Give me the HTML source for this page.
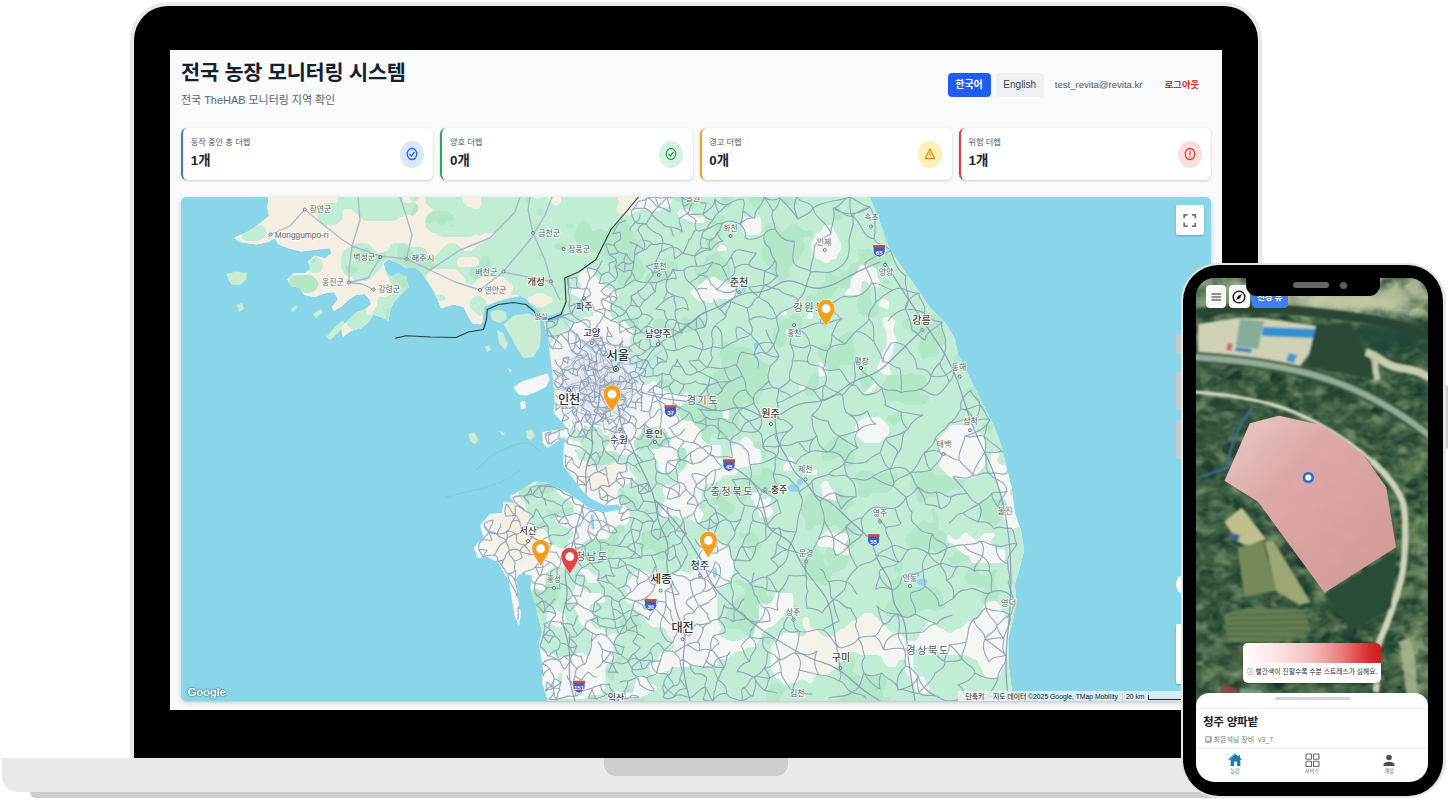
<!DOCTYPE html>
<html lang="ko">
<head>
<meta charset="utf-8">
<title>전국 농장 모니터링 시스템</title>
<style>
*{box-sizing:border-box;margin:0;padding:0}
html,body{width:1450px;height:800px;background:#fff;overflow:hidden}
body{position:relative;font-family:"Liberation Sans","Noto Sans CJK KR",sans-serif;color:#111827}
.abs{position:absolute}
/* laptop */
.lid{position:absolute;left:130px;top:2px;width:1132px;height:760px;background:#000;border:4px solid #e7e9e9;border-bottom:none;border-radius:38px 38px 0 0}
.screen{position:absolute;left:170px;top:50px;width:1052px;height:660px;background:#f8fafb;overflow:hidden}
.base{position:absolute;left:2px;top:758px;width:1388px;height:34px;background:#e9e9e9;border-radius:0 0 16px 16px}
.base .notch{position:absolute;left:602px;top:0;width:184px;height:17.5px;background:#cdcfcf;border-radius:0 0 12px 12px}
.foot{position:absolute;left:30px;top:792px;width:1332px;height:6px;background:#cdcfcf;border-radius:0 0 6px 6px}
/* dashboard */
.title{position:absolute;left:11px;top:8.8px;font-size:20.8px;font-weight:700;color:#15202f;letter-spacing:-.22px;line-height:28px;white-space:nowrap}
.sub{position:absolute;left:11px;top:42px;font-size:10.95px;color:#5b6470;line-height:16px;white-space:nowrap}
.btn{position:absolute;top:22.5px;height:24px;line-height:24px;text-align:center;font-size:10px;border-radius:4px;white-space:nowrap}
.card{position:absolute;top:78px;width:252.25px;height:52px;background:#fff;border-radius:6px;border-left:2.6px solid #3b82f6;box-shadow:0 1px 3px rgba(15,23,42,.13),0 1px 2px rgba(15,23,42,.07)}
.card .lb{position:absolute;left:7.7px;top:9.5px;font-size:8.2px;line-height:10px;color:#4b5563;white-space:nowrap}
.card .val{position:absolute;left:7.7px;top:22.5px;font-size:13.4px;line-height:20px;font-weight:700;color:#1a2433;white-space:nowrap}
.card .ic{position:absolute;right:9.5px;top:12.5px;width:24px;height:27px;border-radius:50%}
.card .ic svg{position:absolute;left:6px;top:6.2px;width:12px;height:14px}
.map{position:absolute;left:11px;top:147px;width:1030px;height:504px;border-radius:6px;overflow:hidden;background:#89d5ea;box-shadow:0 2px 6px rgba(15,23,42,.17),0 1px 2px rgba(15,23,42,.1)}
</style>
</head>
<body>
<!-- laptop -->
<div class="lid"></div>
<div class="screen">
  <div class="title">전국 농장 모니터링 시스템</div>
  <div class="sub">전국 TheHAB 모니터링 지역 확인</div>
  <div class="btn" style="left:777.5px;width:43px;background:#1f5cf0;color:#fff;font-weight:700">한국어</div>
  <div class="btn" style="left:826px;width:47.5px;background:#eef1f4;color:#374151">English</div>
  <div class="btn" style="left:884.8px;color:#4b5563;font-size:9.55px">test_revita@revita.kr</div>
  <div class="btn" style="left:994.8px;color:#dc2626;font-weight:700;font-size:9.3px">로그아웃</div>

  <div class="card" style="left:11px;border-left-color:#3b7bea">
    <div class="lb">동작 중인 총 더헵</div><div class="val">1개</div>
    <div class="ic" style="background:#dbe7f8"><svg viewBox="0 0 24 24" preserveAspectRatio="none" fill="none" stroke="#2b63e3" stroke-width="2.6" stroke-linecap="round" stroke-linejoin="round"><circle cx="12" cy="12" r="9.5"/><path d="M7.8 12.4l3 3 5.4-6"/></svg></div>
  </div>
  <div class="card" style="left:270.25px;border-left-color:#2fa456">
    <div class="lb">양호 더헵</div><div class="val">0개</div>
    <div class="ic" style="background:#d5f3df"><svg viewBox="0 0 24 24" preserveAspectRatio="none" fill="none" stroke="#23964a" stroke-width="2.2" stroke-linecap="round" stroke-linejoin="round"><circle cx="12" cy="12" r="9.5"/><path d="M7.8 12.4l3 3 5.4-6"/></svg></div>
  </div>
  <div class="card" style="left:529.5px;border-left-color:#f0a11f">
    <div class="lb">경고 더헵</div><div class="val">0개</div>
    <div class="ic" style="background:#fdefb5"><svg viewBox="0 0 24 24" preserveAspectRatio="none" fill="none" stroke="#d58a0c" stroke-width="2.2" stroke-linecap="round" stroke-linejoin="round"><path d="M12 3.5L2.5 20h19z"/><path d="M12 10v4.5M12 17.2v.2"/></svg></div>
  </div>
  <div class="card" style="left:788.75px;border-left-color:#d94040">
    <div class="lb">위험 더헵</div><div class="val">1개</div>
    <div class="ic" style="background:#fddcdc"><svg viewBox="0 0 24 24" preserveAspectRatio="none" fill="none" stroke="#d43b3b" stroke-width="2.4" stroke-linecap="round" stroke-linejoin="round"><circle cx="12" cy="12" r="9.5"/><path d="M12 7v6M12 16.6v.2"/></svg></div>
  </div>

  <div class="map">
<svg viewBox="181 197 1030 504" width="1030" height="504" style="position:absolute;left:0;top:0;display:block">
<defs><clipPath id="landclip"><polygon points="268.5,197.0 267.3,208.3 269.0,215.8 258.5,224.5 247.3,232.0 234.0,237.8 239.8,242.0 256.0,244.5 268.5,242.0 274.8,238.3 278.5,244.5 288.5,248.3 301.0,251.5 317.3,249.5 329.8,248.3 331.8,253.3 324.8,258.3 314.8,255.8 308.0,261.5 310.5,269.0 304.8,273.3 294.0,273.3 287.3,279.5 291.0,285.8 300.5,288.3 304.0,295.0 314.8,297.0 324.8,293.3 334.0,292.0 338.0,299.5 331.8,307.0 334.0,310.8 341.0,307.0 348.0,300.0 356.0,295.0 364.8,294.0 369.8,299.5 371.0,304.5 364.8,309.5 356.0,312.5 348.5,320.0 341.0,327.5 343.0,337.0 351.0,330.8 361.0,328.3 368.5,322.0 373.5,314.5 381.0,317.0 388.5,320.8 389.8,312.0 393.5,302.0 401.0,294.5 408.5,287.0 406.0,277.0 398.5,273.3 391.0,277.0 386.0,272.0 383.5,263.3 388.5,259.5 398.5,263.3 406.0,268.3 414.8,267.0 421.0,272.0 427.3,280.8 433.5,290.8 438.5,302.0 441.0,308.3 453.5,304.5 463.5,307.0 468.5,317.0 472.3,323.3 481.0,324.5 484.8,317.0 487.3,307.0 496.0,302.0 508.5,298.3 521.0,295.8 527.3,299.5 532.3,307.0 543.5,320.8 548.0,337.0 549.8,354.5 552.3,372.0 553.5,384.5 554.8,402.0 553.5,413.3 559.8,419.5 566.0,427.0 558.5,429.5 546.0,432.0 542.3,442.0 547.3,448.3 558.5,440.8 564.8,437.0 563.5,449.5 563.4,465.7 572.8,478.2 582.2,490.8 590.0,498.0 604.2,505.5 618.3,504.5 621.4,509.6 605.7,512.3 592.0,509.0 588.5,508.0 579.0,500.2 566.5,492.4 547.7,483.0 535.1,481.4 522.6,489.2 510.0,496.4 514.7,503.3 503.8,501.8 502.2,512.8 489.6,514.3 480.2,525.3 483.4,537.9 474.0,547.3 477.1,558.3 488.1,556.7 499.0,563.6 505.3,575.5 508.5,578.6 511.6,597.5 514.7,616.3 518.8,625.7 521.0,613.2 517.9,594.3 516.3,578.6 519.4,574.0 532.0,575.5 530.4,588.1 535.1,603.7 538.9,619.4 542.0,632.0 538.9,644.5 542.0,663.4 542.0,682.2 547.7,701.0 1013.2,701.0 1011.6,688.5 1008.5,663.3 1008.5,638.1 1013.2,619.2 1016.3,600.3 1014.8,584.5 1019.5,568.8 1024.2,549.9 1021.1,530.9 1014.8,512.0 1011.6,486.8 1006.9,467.9 1002.2,449.1 995.9,430.2 986.4,411.3 977.0,392.4 967.5,373.5 958.0,354.6 954.9,338.8 945.4,323.0 929.7,307.3 917.0,288.4 901.3,266.3 888.7,247.4 882.4,228.5 876.0,212.8 869.8,197.0"/></clipPath>
<filter id="soft" x="-5%" y="-5%" width="110%" height="110%"><feGaussianBlur stdDeviation="0.6"/></filter>
<filter id="blur8" x="-30%" y="-30%" width="160%" height="160%"><feGaussianBlur stdDeviation="9"/></filter>
<filter id="goo" x="181" y="197" width="1030" height="504" filterUnits="userSpaceOnUse" color-interpolation-filters="sRGB"><feGaussianBlur stdDeviation="2.2" result="b"/><feComponentTransfer><feFuncA type="linear" slope="14" intercept="-6"/></feComponentTransfer></filter>
</defs>
<rect x="181" y="197" width="1030" height="504" fill="#89d5ea"/>
<g filter="url(#soft)">
<polygon points="268.5,197.0 267.3,208.3 269.0,215.8 258.5,224.5 247.3,232.0 234.0,237.8 239.8,242.0 256.0,244.5 268.5,242.0 274.8,238.3 278.5,244.5 288.5,248.3 301.0,251.5 317.3,249.5 329.8,248.3 331.8,253.3 324.8,258.3 314.8,255.8 308.0,261.5 310.5,269.0 304.8,273.3 294.0,273.3 287.3,279.5 291.0,285.8 300.5,288.3 304.0,295.0 314.8,297.0 324.8,293.3 334.0,292.0 338.0,299.5 331.8,307.0 334.0,310.8 341.0,307.0 348.0,300.0 356.0,295.0 364.8,294.0 369.8,299.5 371.0,304.5 364.8,309.5 356.0,312.5 348.5,320.0 341.0,327.5 343.0,337.0 351.0,330.8 361.0,328.3 368.5,322.0 373.5,314.5 381.0,317.0 388.5,320.8 389.8,312.0 393.5,302.0 401.0,294.5 408.5,287.0 406.0,277.0 398.5,273.3 391.0,277.0 386.0,272.0 383.5,263.3 388.5,259.5 398.5,263.3 406.0,268.3 414.8,267.0 421.0,272.0 427.3,280.8 433.5,290.8 438.5,302.0 441.0,308.3 453.5,304.5 463.5,307.0 468.5,317.0 472.3,323.3 481.0,324.5 484.8,317.0 487.3,307.0 496.0,302.0 508.5,298.3 521.0,295.8 527.3,299.5 532.3,307.0 543.5,320.8 548.0,337.0 549.8,354.5 552.3,372.0 553.5,384.5 554.8,402.0 553.5,413.3 559.8,419.5 566.0,427.0 558.5,429.5 546.0,432.0 542.3,442.0 547.3,448.3 558.5,440.8 564.8,437.0 563.5,449.5 563.4,465.7 572.8,478.2 582.2,490.8 590.0,498.0 604.2,505.5 618.3,504.5 621.4,509.6 605.7,512.3 592.0,509.0 588.5,508.0 579.0,500.2 566.5,492.4 547.7,483.0 535.1,481.4 522.6,489.2 510.0,496.4 514.7,503.3 503.8,501.8 502.2,512.8 489.6,514.3 480.2,525.3 483.4,537.9 474.0,547.3 477.1,558.3 488.1,556.7 499.0,563.6 505.3,575.5 508.5,578.6 511.6,597.5 514.7,616.3 518.8,625.7 521.0,613.2 517.9,594.3 516.3,578.6 519.4,574.0 532.0,575.5 530.4,588.1 535.1,603.7 538.9,619.4 542.0,632.0 538.9,644.5 542.0,663.4 542.0,682.2 547.7,701.0 1013.2,701.0 1011.6,688.5 1008.5,663.3 1008.5,638.1 1013.2,619.2 1016.3,600.3 1014.8,584.5 1019.5,568.8 1024.2,549.9 1021.1,530.9 1014.8,512.0 1011.6,486.8 1006.9,467.9 1002.2,449.1 995.9,430.2 986.4,411.3 977.0,392.4 967.5,373.5 958.0,354.6 954.9,338.8 945.4,323.0 929.7,307.3 917.0,288.4 901.3,266.3 888.7,247.4 882.4,228.5 876.0,212.8 869.8,197.0" fill="#f4f6f3"/>
<polygon points="226.0,274.0 236.0,271.5 247.0,273.0 246.0,280.0 240.0,285.0 231.0,284.5" fill="#c9ecd3"/>
<polygon points="237.0,305.0 242.0,303.0 244.0,309.0 239.0,312.0" fill="#c9ecd3"/>
<polygon points="291.0,309.0 296.0,305.0 297.0,308.0 293.0,312.0" fill="#c9ecd3"/>
<polygon points="313.0,314.0 321.0,309.0 323.0,312.0 316.0,318.0" fill="#c9ecd3"/>
<polygon points="326.0,337.0 336.0,326.0 343.0,320.0 345.0,324.0 338.0,333.0 330.0,340.0" fill="#c9ecd3"/>
<polygon points="490.0,312.0 498.0,309.5 506.0,312.0 507.0,319.0 500.0,323.0 492.0,320.0" fill="#c9ecd3"/>
<polygon points="503.5,324.5 513.5,315.8 528.5,313.3 539.8,319.5 541.0,332.0 539.8,347.0 533.5,357.0 523.5,358.3 516.0,347.0 511.0,337.0" fill="#c9ecd3"/>
<polygon points="497.0,330.0 503.0,333.0 508.0,344.0 505.0,350.0 499.0,343.0" fill="#c9ecd3"/>
<polygon points="468.5,434.0 474.0,432.0 478.5,440.0 475.0,444.5 470.0,441.0" fill="#c9ecd3"/>
<polygon points="526.0,431.0 532.0,429.5 534.8,436.0 531.0,440.8 527.0,438.0" fill="#c9ecd3"/>
<polygon points="499.0,431.0 505.0,433.0 503.0,436.0" fill="#c9ecd3"/>
<polygon points="485.0,347.0 489.0,345.0 491.0,350.0 487.0,352.0" fill="#c9ecd3"/>
<polygon points="508.0,368.0 512.0,370.0 510.0,373.0" fill="#c9ecd3"/>
<polygon points="513.5,387.0 523.5,380.8 536.0,377.0 547.3,373.3 549.8,379.5 546.0,387.0 536.0,392.0 526.0,395.8 518.5,394.5" fill="#f4f5f5"/>
<polygon points="520.0,402.0 525.0,401.0 526.0,408.0 521.0,409.5" fill="#f4f5f5"/>
<polygon points="542.0,432.0 556.0,430.0 560.0,437.0 550.0,446.0 543.0,442.0" fill="#f4f5f5"/>
</g>
<g clip-path="url(#landclip)">
<polygon points="181,197 640,197 600,250 566,280 566,330 181,345" fill="#f4efe2"/>
<ellipse cx="516" cy="528" rx="22" ry="40" fill="#f4eedd" filter="url(#blur8)"/>
<ellipse cx="600" cy="470" rx="22" ry="30" fill="#f4f0e2" filter="url(#blur8)" opacity=".8"/>
<ellipse cx="840" cy="640" rx="40" ry="40" fill="#f5f1e4" filter="url(#blur8)" opacity=".7"/>
<g filter="url(#goo)" fill="none" stroke="#c0edd4" stroke-linecap="round" stroke-width="5.2">
<path d="M344,190h56M448,190h8M480,190h36M560,190h64M656,190h192M884,190h60M988,190h52M344,194h56M412,194h8M432,194h24M480,194h48M544,194h.01M560,194h52M656,194h196M864,194h.01M876,194h76M988,194h52M340,198h60M412,198h4M428,198h32M484,198h48M544,198h.01M564,198h52M672,198h288M984,198h56M340,202h60M428,202h32M484,202h64M564,202h12M584,202h32M676,202h288M980,202h60M324,206h12M344,206h72M432,206h32M484,206h68M560,206h56M672,206h296M980,206h60M320,210h20M356,210h60M440,210h32M480,210h132M644,210h.01M664,210h12M692,210h348M320,214h20M360,214h44M412,214h.01M432,214h184M636,214h36M696,214h344M320,218h20M364,218h32M428,218h252M708,218h32M764,218h276M200,222h.01M324,222h12M428,222h260M708,222h32M764,222h276M200,226h12M260,226h.01M428,226h312M764,226h56M836,226h204M200,230h12M252,230h12M432,230h308M764,230h56M836,230h204M200,234h12M244,234h20M440,234h32M480,234h.01M500,234h240M764,234h48M840,234h200M200,238h8M244,238h16M496,238h316M840,238h200M200,242h8M488,242h320M844,242h196M200,246h8M356,246h12M392,246h16M448,246h8M480,246h236M728,246h80M844,246h196M200,250h12M348,250h24M392,250h32M444,250h16M476,250h236M732,250h76M844,250h196M200,254h16M344,254h32M384,254h40M440,254h372M840,254h200M200,258h16M316,258h.01M344,258h84M436,258h20M480,258h332M840,258h200M200,262h36M312,262h8M344,262h36M396,262h56M484,262h336M832,262h208M200,266h36M312,266h8M344,266h36M392,266h64M480,266h364M852,266h4M876,266h92M980,266h60M200,270h40M312,270h8M344,270h32M392,270h36M460,270h120M596,270h112M716,270h140M880,270h84M980,270h60M204,274h36M348,274h24M388,274h8M408,274h16M464,274h112M596,274h256M880,274h84M980,274h60M204,278h36M292,278h20M356,278h12M392,278h12M412,278h8M468,278h8M508,278h68M600,278h104M720,278h128M880,278h84M980,278h60M208,282h16M292,282h24M392,282h12M412,282h8M468,282h4M512,282h64M604,282h96M728,282h120M864,282h.01M884,282h80M980,282h60M208,286h12M292,286h24M396,286h24M516,286h64M608,286h88M736,286h112M864,286h4M884,286h80M980,286h60M208,290h8M304,290h8M396,290h28M516,290h52M616,290h72M740,290h104M864,290h100M980,290h60M208,294h4M248,294h.01M396,294h4M408,294h24M512,294h.01M520,294h12M548,294h20M624,294h64M740,294h100M864,294h100M980,294h60M380,298h.01M388,298h56M476,298h4M524,298h.01M556,298h20M620,298h8M636,298h56M736,298h144M888,298h152M380,302h48M472,302h12M520,302h4M556,302h28M616,302h80M704,302h.01M716,302h160M892,302h148M380,306h44M472,306h12M524,306h8M548,306h36M612,306h264M892,306h148M364,310h.01M376,310h48M476,310h8M524,310h64M612,310h168M788,310h96M892,310h148M356,314h8M376,314h48M480,314h.01M524,314h68M612,314h164M792,314h12M816,314h224M352,318h68M532,318h48M616,318h188M816,318h64M896,318h144M348,322h24M380,322h40M540,322h32M628,322h116M756,322h124M900,322h140M352,326h72M544,326h20M632,326h248M896,326h144M356,330h16M380,330h44M544,330h16M568,330h.01M636,330h144M792,330h92M896,330h144M360,334h8M384,334h40M544,334h12M636,334h148M796,334h88M896,334h144M200,338h4M384,338h8M400,338h24M544,338h8M632,338h252M900,338h140M200,342h12M252,342h20M404,342h16M544,342h4M632,342h252M900,342h140M200,346h12M248,346h40M432,346h.01M544,346h4M636,346h248M896,346h128M200,350h16M244,350h44M428,350h4M544,350h4M632,350h248M896,350h124M200,354h92M432,354h.01M548,354h.01M632,354h248M896,354h124M200,358h96M544,358h4M628,358h140M776,358h40M824,358h56M892,358h128M200,362h100M548,362h.01M632,362h184M824,362h52M892,362h112M200,366h104M516,366h.01M636,366h180M828,366h48M892,366h104M200,370h108M516,370h.01M636,370h180M828,370h44M892,370h100M200,374h108M516,374h.01M636,374h180M832,374h48M896,374h100M200,378h108M408,378h.01M432,378h.01M552,378h.01M636,378h180M824,378h4M840,378h152M200,382h96M408,382h.01M544,382h8M640,382h8M660,382h212M880,382h108M200,386h96M404,386h4M420,386h.01M544,386h8M660,386h136M808,386h60M880,386h108M200,390h96M408,390h12M544,390h8M668,390h128M808,390h56M876,390h112M200,394h96M408,394h12M544,394h8M680,394h.01M692,394h168M872,394h120M200,398h100M408,398h8M452,398h.01M544,398h8M692,398h304M1012,398h12M200,402h100M332,402h.01M412,402h4M448,402h12M544,402h8M688,402h344M200,406h104M328,406h8M448,406h16M544,406h8M684,406h348M200,410h104M324,410h24M444,410h20M544,410h8M680,410h40M732,410h300M200,414h104M320,414h28M444,414h20M544,414h8M680,414h40M732,414h300M204,418h104M320,418h28M444,418h24M544,418h12M684,418h36M732,418h128M884,418h152M208,422h124M440,422h32M544,422h16M696,422h128M836,422h20M888,422h152M212,426h104M416,426h56M544,426h20M700,426h152M892,426h56M976,426h64M212,430h32M252,430h60M420,430h44M544,430h8M572,430h.01M584,430h16M644,430h20M704,430h148M892,430h52M980,430h60M216,434h24M260,434h52M420,434h44M544,434h.01M572,434h28M644,434h20M704,434h148M892,434h48M984,434h32M1024,434h16M220,438h20M256,438h40M304,438h4M424,438h44M564,438h.01M572,438h36M640,438h28M704,438h36M752,438h104M888,438h48M988,438h52M224,442h16M252,442h40M428,442h44M560,442h4M584,442h24M636,442h32M708,442h28M756,442h104M884,442h52M988,442h52M224,446h.01M236,446h60M368,446h8M436,446h36M544,446h.01M552,446h8M584,446h20M636,446h24M724,446h4M756,446h180M988,446h52M224,450h.01M244,450h52M364,450h20M440,450h36M548,450h12M576,450h.01M588,450h12M640,450h8M680,450h4M724,450h4M764,450h172M988,450h4M1000,450h40M224,454h.01M240,454h56M364,454h28M440,454h32M552,454h8M580,454h36M640,454h8M680,454h4M724,454h4M764,454h172M988,454h.01M1004,454h36M224,458h72M364,458h32M440,458h32M552,458h8M580,458h72M680,458h4M724,458h4M764,458h20M796,458h140M988,458h.01M1000,458h40M228,462h68M364,462h20M392,462h4M440,462h32M548,462h8M592,462h20M624,462h32M680,462h4M764,462h20M796,462h140M988,462h.01M1000,462h8M1016,462h24M244,466h56M376,466h16M432,466h36M544,466h12M596,466h4M632,466h24M680,466h4M752,466h4M764,466h16M796,466h140M988,466h.01M1024,466h16M256,470h44M384,470h8M432,470h36M544,470h20M632,470h24M680,470h.01M740,470h40M796,470h8M820,470h120M984,470h4M1032,470h8M260,474h40M384,474h8M428,474h36M544,474h24M636,474h24M668,474h8M740,474h60M820,474h124M980,474h8M1028,474h12M260,478h40M384,478h12M424,478h40M492,478h.01M544,478h28M640,478h36M724,478h72M804,478h144M976,478h16M1028,478h12M264,482h32M360,482h.01M384,482h12M428,482h36M540,482h32M636,482h36M720,482h100M832,482h164M1032,482h8M200,486h.01M360,486h12M384,486h16M428,486h36M536,486h12M556,486h20M628,486h32M708,486h108M832,486h164M1032,486h8M200,490h4M356,490h60M428,490h8M524,490h28M564,490h16M620,490h40M704,490h52M764,490h56M836,490h160M1012,490h.01M1032,490h8M200,494h12M352,494h64M428,494h4M520,494h36M572,494h4M620,494h40M704,494h44M764,494h56M840,494h160M1012,494h.01M1028,494h12M200,498h12M348,498h68M428,498h4M472,498h.01M524,498h36M576,498h.01M620,498h44M704,498h44M764,498h.01M776,498h44M840,498h160M1028,498h12M200,502h12M348,502h84M528,502h40M624,502h36M704,502h48M772,502h60M840,502h164M1028,502h12M200,506h12M348,506h92M528,506h44M616,506h.01M628,506h32M700,506h52M772,506h232M1028,506h12M200,510h8M348,510h96M528,510h44M632,510h28M704,510h52M776,510h228M1032,510h.01M200,514h8M264,514h8M340,514h24M384,514h68M532,514h28M568,514h.01M632,514h24M708,514h48M776,514h224M1032,514h.01M200,518h8M264,518h32M340,518h20M384,518h72M532,518h20M632,518h28M672,518h4M704,518h52M764,518h.01M772,518h228M1032,518h.01M200,522h12M264,522h8M280,522h16M336,522h20M388,522h68M532,522h20M632,522h60M704,522h300M1028,522h12M200,526h8M264,526h4M280,526h16M336,526h16M388,526h72M536,526h24M620,526h.01M628,526h376M1024,526h16M280,530h16M324,530h28M388,530h72M548,530h20M616,530h208M832,530h176M1016,530h24M280,534h16M320,534h32M388,534h76M552,534h20M612,534h48M680,534h.01M704,534h116M852,534h92M952,534h8M972,534h8M1000,534h40M276,538h20M320,538h32M388,538h76M552,538h16M612,538h204M852,538h92M956,538h.01M976,538h.01M996,538h44M276,542h20M320,542h32M388,542h76M552,542h12M588,542h120M720,542h92M848,542h96M992,542h48M236,546h8M252,546h8M272,546h24M320,546h28M388,546h76M560,546h4M584,546h116M728,546h88M848,546h104M996,546h44M228,550h52M288,550h16M316,550h24M388,550h60M456,550h12M568,550h128M732,550h100M852,550h104M1008,550h32M212,554h68M292,554h48M388,554h56M460,554h16M568,554h128M732,554h100M852,554h108M1008,554h32M212,558h68M304,558h36M392,558h16M420,558h24M464,558h12M568,558h124M736,558h232M1008,558h32M216,562h64M316,562h28M392,562h16M420,562h24M464,562h12M568,562h124M736,562h232M1008,562h32M216,566h64M312,566h32M392,566h16M420,566h24M464,566h8M568,566h124M736,566h304M216,570h68M296,570h.01M312,570h32M396,570h4M408,570h36M464,570h8M552,570h12M592,570h40M640,570h.01M648,570h28M684,570h8M736,570h304M212,574h68M316,574h28M408,574h64M548,574h32M596,574h36M652,574h20M736,574h304M212,578h28M264,578h8M320,578h12M348,578h.01M408,578h64M548,578h36M604,578h24M660,578h4M732,578h308M216,582h24M268,582h.01M320,582h12M408,582h64M548,582h36M604,582h20M732,582h308M224,586h12M316,586h16M400,586h80M548,586h24M584,586h40M728,586h312M312,590h20M396,590h88M536,590h.01M548,590h24M588,590h36M720,590h320M308,594h24M392,594h12M420,594h64M528,594h40M604,594h20M720,594h52M796,594h244M308,598h20M392,598h8M416,598h68M528,598h36M608,598h12M720,598h52M796,598h244M308,602h16M392,602h8M416,602h68M528,602h40M608,602h16M720,602h36M764,602h4M796,602h188M1000,602h40M308,606h12M412,606h76M532,606h40M592,606h40M720,606h36M796,606h184M1004,606h36M408,610h80M532,610h16M560,610h12M592,610h40M720,610h36M796,610h184M1004,610h36M404,614h88M532,614h12M568,614h8M596,614h44M720,614h36M788,614h72M876,614h100M1008,614h32M404,618h88M532,618h12M568,618h8M596,618h44M720,618h36M784,618h16M812,618h44M880,618h96M1008,618h32M212,622h.01M404,622h88M532,622h12M568,622h8M592,622h52M720,622h36M780,622h20M812,622h36M884,622h40M936,622h28M1012,622h28M208,626h4M352,626h.01M376,626h4M404,626h88M528,626h24M568,626h12M596,626h52M724,626h28M776,626h24M812,626h32M888,626h36M940,626h20M1012,626h28M200,630h16M352,630h.01M364,630h12M404,630h100M524,630h60M608,630h56M724,630h28M768,630h36M820,630h16M892,630h28M948,630h4M1012,630h28M200,634h16M364,634h8M404,634h104M520,634h68M608,634h.01M620,634h44M720,634h32M764,634h16M800,634h4M824,634h8M904,634h12M1012,634h28M200,638h16M360,638h12M420,638h168M620,638h48M728,638h12M764,638h8M908,638h8M1012,638h28M200,642h20M248,642h.01M360,642h16M428,642h160M616,642h56M760,642h12M1012,642h28M200,646h20M248,646h.01M360,646h16M396,646h.01M428,646h160M616,646h56M760,646h8M1012,646h28M200,650h16M364,650h24M428,650h104M544,650h44M616,650h52M748,650h20M920,650h.01M1012,650h28M200,654h8M380,654h12M412,654h8M428,654h96M556,654h16M588,654h.01M616,654h40M736,654h32M852,654h4M916,654h4M936,654h4M1012,654h28M200,658h8M384,658h16M444,658h76M616,658h40M732,658h36M848,658h32M916,658h52M1012,658h28M200,662h4M248,662h.01M392,662h12M444,662h24M488,662h8M512,662h8M612,662h40M720,662h48M844,662h36M900,662h4M916,662h60M1008,662h32M200,666h4M308,666h4M396,666h8M448,666h16M516,666h.01M608,666h36M720,666h48M840,666h44M900,666h4M916,666h60M1008,666h32M200,670h4M304,670h20M396,670h12M448,670h16M516,670h.01M608,670h40M672,670h96M836,670h64M916,670h64M1004,670h36M200,674h8M256,674h20M296,674h28M456,674h8M516,674h.01M560,674h.01M608,674h28M644,674h4M664,674h108M808,674h.01M832,674h72M920,674h60M1004,674h36M200,678h8M248,678h4M260,678h60M460,678h.01M560,678h.01M608,678h28M648,678h124M816,678h92M928,678h56M1000,678h40M200,682h8M248,682h4M260,682h60M476,682h.01M560,682h.01M608,682h24M652,682h128M800,682h4M816,682h92M928,682h108M200,686h8M248,686h76M476,686h.01M608,686h24M660,686h120M788,686h8M804,686h108M932,686h108M200,690h8M248,690h4M260,690h64M348,690h.01M476,690h4M544,690h.01M608,690h4M620,690h12M660,690h136M804,690h108M932,690h108M200,694h8M264,694h60M348,694h.01M476,694h.01M544,694h.01M604,694h4M652,694h264M928,694h108M200,698h4M264,698h16M292,698h4M320,698h8M348,698h.01M476,698h.01M544,698h.01M588,698h16M644,698h388M200,702h4M276,702h.01M292,702h4M320,702h4M348,702h.01M464,702h16M544,702h72M624,702h292M924,702h108M200,706h8M256,706h.01M320,706h4M340,706h8M464,706h20M544,706h72M624,706h292M924,706h108"/>
</g>
<g filter="url(#goo)" fill="none" stroke="#aee5c5" stroke-linecap="round" stroke-width="5.2" opacity=".8">
<path d="M344,190h.01M560,190h4M616,190h8M656,190h44M712,190h8M740,190h16M780,190h8M804,190h24M940,190h4M544,194h.01M660,194h32M716,194h8M744,194h12M780,194h8M816,194h12M948,194h4M1036,194h4M528,198h.01M676,198h16M724,198h8M752,198h8M768,198h.01M784,198h4M1000,198h.01M1036,198h4M528,202h.01M608,202h.01M684,202h12M724,202h4M752,202h12M776,202h.01M784,202h12M1000,202h4M1036,202h4M416,206h.01M684,206h8M724,206h4M756,206h4M892,206h.01M1000,206h4M1036,206h4M416,210h.01M540,210h.01M892,210h8M956,210h8M1012,210h4M1024,210h16M412,214h.01M432,214h16M540,214h.01M836,214h4M892,214h16M952,214h4M996,214h32M428,218h24M716,218h8M836,218h4M900,218h8M996,218h8M1012,218h12M428,222h.01M440,222h4M584,222h.01M712,222h8M888,222h.01M1020,222h.01M1028,222h.01M452,226h.01M536,226h4M568,226h4M580,226h8M616,226h12M716,226h4M768,226h8M792,226h4M888,226h.01M900,226h.01M984,226h.01M1000,226h.01M536,230h.01M580,230h8M600,230h.01M612,230h16M716,230h4M768,230h8M788,230h12M888,230h12M912,230h4M980,230h8M1000,230h.01M576,234h56M720,234h.01M768,234h44M884,234h12M912,234h4M988,234h4M1000,234h.01M1028,234h.01M576,238h56M708,238h.01M768,238h32M888,238h24M992,238h8M580,242h60M708,242h8M768,242h32M888,242h24M996,242h4M400,246h4M556,246h8M584,246h56M708,246h8M764,246h40M888,246h20M932,246h.01M364,250h4M400,250h8M588,250h.01M596,250h44M764,250h36M860,250h.01M868,250h.01M888,250h4M900,250h8M928,250h4M1040,250h.01M356,254h12M384,254h.01M400,254h12M540,254h.01M604,254h32M716,254h.01M764,254h36M860,254h32M900,254h.01M1040,254h.01M200,258h.01M208,258h4M316,258h.01M360,258h24M400,258h28M484,258h4M540,258h.01M608,258h24M708,258h12M764,258h32M864,258h28M200,262h16M312,262h.01M368,262h4M396,262h36M484,262h4M616,262h24M656,262h8M672,262h.01M708,262h16M768,262h24M860,262h28M204,266h16M348,266h.01M392,266h40M480,266h8M616,266h24M656,266h20M704,266h24M772,266h16M824,266h.01M852,266h4M876,266h4M208,270h8M348,270h8M376,270h.01M392,270h.01M400,270h28M472,270h16M616,270h28M656,270h12M676,270h.01M696,270h12M716,270h12M772,270h12M840,270h.01M852,270h4M964,270h.01M1032,270h.01M208,274h12M388,274h8M408,274h16M472,274h20M620,274h20M652,274h16M700,274h28M776,274h12M828,274h.01M844,274h8M932,274h.01M1040,274h.01M224,278h.01M232,278h.01M292,278h20M396,278h8M412,278h8M476,278h.01M620,278h20M648,278h20M700,278h4M720,278h4M776,278h8M828,278h8M844,278h4M928,278h4M1040,278h.01M224,282h.01M292,282h24M400,282h4M412,282h8M620,282h12M648,282h.01M660,282h.01M700,282h.01M828,282h20M884,282h4M924,282h12M1032,282h8M292,286h24M404,286h4M624,286h.01M824,286h12M844,286h4M924,286h12M1024,286h16M304,290h8M820,290h4M832,290h.01M868,290h.01M1020,290h20M248,294h.01M820,294h12M864,294h4M1016,294h16M808,298h16M860,298h8M1016,298h16M808,302h12M860,302h8M1012,302h20M808,306h8M860,306h16M1012,306h24M388,310h8M536,310h4M860,310h16M1012,310h24M388,314h12M864,314h12M920,314h8M1008,314h32M388,318h16M636,318h.01M684,318h.01M792,318h8M916,318h24M1008,318h32M388,322h16M628,322h8M656,322h8M684,322h8M700,322h4M780,322h20M824,322h.01M904,322h36M1008,322h32M384,326h20M632,326h4M656,326h12M684,326h20M780,326h20M824,326h.01M904,326h36M1008,326h32M380,330h24M656,330h4M672,330h.01M684,330h8M776,330h4M912,330h28M1012,330h28M384,334h16M648,334h4M672,334h8M776,334h8M848,334h4M920,334h20M1012,334h28M384,338h4M648,338h.01M672,338h4M776,338h8M840,338h12M924,338h20M1016,338h16M404,342h4M648,342h.01M724,342h.01M776,342h8M844,342h4M924,342h20M1020,342h.01M724,346h8M780,346h.01M824,346h4M840,346h12M920,346h16M724,350h24M820,350h12M840,350h12M920,350h16M240,354h.01M632,354h.01M720,354h32M820,354h32M924,354h12M960,354h.01M628,358h8M724,358h32M824,358h28M924,358h.01M956,358h16M632,362h4M724,362h36M824,362h28M956,362h.01M964,362h12M516,366h.01M636,366h.01M708,366h.01M724,366h44M828,366h8M864,366h.01M968,366h8M272,370h.01M304,370h4M516,370h.01M724,370h40M836,370h.01M864,370h.01M964,370h4M268,374h16M304,374h4M516,374h.01M716,374h48M816,374h.01M852,374h.01M864,374h.01M912,374h.01M268,378h16M304,378h4M716,378h40M768,378h.01M812,378h4M860,378h12M888,378h36M960,378h.01M236,382h4M264,382h32M660,382h8M716,382h52M812,382h4M864,382h4M888,382h36M980,382h8M236,386h8M260,386h36M420,386h.01M660,386h8M708,386h56M808,386h8M864,386h4M884,386h40M976,386h12M236,390h44M288,390h8M408,390h12M552,390h.01M668,390h.01M708,390h52M808,390h4M884,390h32M924,390h.01M936,390h.01M968,390h20M240,394h8M256,394h40M412,394h8M708,394h52M808,394h4M888,394h28M972,394h20M240,398h.01M256,398h44M416,398h.01M708,398h48M888,398h40M976,398h20M256,402h28M292,402h8M696,402h44M748,402h8M876,402h.01M904,402h20M936,402h.01M980,402h12M292,406h8M448,406h.01M460,406h.01M684,406h56M984,406h8M324,410h4M444,410h8M680,410h40M732,410h8M900,410h.01M984,410h4M320,414h16M444,414h4M680,414h40M732,414h4M876,414h.01M900,414h.01M320,418h16M684,418h36M732,418h4M888,418h12M320,422h12M696,422h4M708,422h28M892,422h4M700,426h36M984,426h8M456,430h.01M644,430h16M704,430h28M904,430h.01M984,430h4M456,434h.01M644,434h20M704,434h4M720,434h12M604,438h4M640,438h28M704,438h4M740,438h.01M836,438h8M448,442h.01M604,442h4M636,442h8M652,442h16M708,442h.01M756,442h.01M832,442h12M636,446h8M652,446h8M756,446h4M828,446h20M640,450h.01M680,450h4M764,450h.01M824,450h24M392,454h.01M600,454h8M616,454h.01M680,454h4M764,454h.01M824,454h28M1036,454h4M388,458h8M452,458h4M600,458h16M680,458h4M764,458h.01M824,458h8M844,458h8M1036,458h4M280,462h8M392,462h4M456,462h4M596,462h12M680,462h4M844,462h8M1040,462h.01M384,466h8M544,466h.01M680,466h4M848,466h.01M1036,466h4M296,470h.01M384,470h8M544,470h.01M764,470h4M1036,470h4M296,474h4M384,474h8M544,474h.01M764,474h8M860,474h12M884,474h.01M892,474h4M916,474h4M928,474h4M1036,474h4M384,478h12M424,478h.01M544,478h4M732,478h.01M752,478h24M856,478h36M916,478h32M1036,478h4M360,482h.01M384,482h12M428,482h.01M540,482h12M744,482h32M860,482h32M912,482h52M1036,482h4M360,486h.01M384,486h16M536,486h12M556,486h.01M712,486h8M740,486h28M780,486h.01M864,486h28M912,486h48M1036,486h4M356,490h52M524,490h28M620,490h.01M712,490h4M740,490h16M764,490h.01M840,490h.01M860,490h28M916,490h32M1036,490h4M352,494h56M520,494h12M540,494h.01M624,494h.01M716,494h4M740,494h4M812,494h.01M840,494h.01M860,494h8M920,494h16M348,498h12M368,498h40M524,498h.01M624,498h.01M632,498h.01M716,498h8M740,498h4M808,498h12M840,498h8M920,498h4M200,502h8M348,502h56M528,502h.01M624,502h12M712,502h12M808,502h24M840,502h12M920,502h.01M984,502h20M200,506h12M348,506h52M616,506h.01M628,506h8M700,506h4M724,506h8M804,506h44M980,506h24M200,510h4M348,510h52M548,510h.01M564,510h8M648,510h.01M720,510h12M804,510h40M932,510h.01M980,510h24M200,514h4M348,514h16M384,514h16M552,514h8M568,514h.01M644,514h4M724,514h4M804,514h40M936,514h.01M984,514h16M200,518h4M292,518h4M348,518h12M384,518h.01M552,518h.01M676,518h.01M808,518h36M936,518h.01M984,518h16M200,522h8M292,522h4M348,522h8M544,522h.01M672,522h4M808,522h40M924,522h.01M936,522h.01M988,522h8M200,526h8M348,526h4M536,526h8M620,526h.01M668,526h4M808,526h4M828,526h.01M840,526h16M920,526h16M352,530h.01M616,530h8M656,530h12M808,530h.01M844,530h12M916,530h20M612,534h4M644,534h16M740,534h.01M748,534h4M852,534h.01M912,534h32M568,538h.01M612,538h4M644,538h24M744,538h12M908,538h36M588,542h28M644,542h24M748,542h8M848,542h4M908,542h36M564,546h.01M584,546h32M640,546h28M752,546h8M848,546h4M912,546h36M996,546h.01M576,550h36M656,550h8M752,550h4M804,550h12M828,550h4M936,550h8M244,554h.01M584,554h28M660,554h4M756,554h.01M804,554h16M828,554h4M956,554h4M240,558h4M312,558h.01M584,558h.01M592,558h16M660,558h4M804,558h16M828,558h20M948,558h.01M956,558h12M240,562h4M408,562h.01M420,562h12M476,562h.01M604,562h.01M804,562h16M832,562h12M900,562h.01M952,562h4M1036,562h4M236,566h8M312,566h.01M408,566h.01M420,566h12M472,566h.01M808,566h4M820,566h4M832,566h12M896,566h4M972,566h4M1032,566h8M240,570h8M296,570h.01M312,570h.01M396,570h.01M408,570h24M472,570h.01M600,570h.01M676,570h.01M804,570h8M820,570h4M832,570h4M880,570h.01M896,570h4M972,570h4M996,570h.01M1028,570h12M240,574h4M416,574h16M804,574h24M960,574h.01M968,574h8M992,574h.01M1036,574h4M236,578h4M416,578h16M548,578h.01M808,578h20M900,578h.01M968,578h24M1036,578h4M236,582h4M416,582h16M548,582h.01M736,582h4M820,582h8M892,582h8M968,582h24M1008,582h4M1036,582h4M416,586h12M548,586h8M600,586h.01M728,586h.01M744,586h8M760,586h.01M896,586h.01M904,586h4M980,586h.01M988,586h4M1036,586h4M416,590h12M484,590h.01M536,590h.01M548,590h8M748,590h16M780,590h4M896,590h40M988,590h8M1036,590h4M324,594h4M420,594h8M480,594h4M528,594h28M748,594h16M896,594h44M984,594h12M1032,594h8M324,598h4M480,598h.01M528,598h28M740,598h24M772,598h.01M896,598h44M984,598h12M1036,598h4M324,602h.01M528,602h24M736,602h20M764,602h4M892,602h48M984,602h.01M1040,602h.01M532,606h12M728,606h28M796,606h.01M888,606h12M912,606h32M1040,606h.01M428,610h.01M536,610h4M732,610h24M888,610h32M936,610h.01M980,610h.01M428,614h4M728,614h28M888,614h24M1040,614h.01M404,618h.01M420,618h12M444,618h12M632,618h4M728,618h28M1036,618h4M404,622h4M424,622h36M620,622h16M728,622h28M1036,622h4M352,626h.01M376,626h4M404,626h12M424,626h.01M436,626h24M624,626h16M728,626h24M1040,626h.01M352,630h.01M364,630h12M404,630h20M440,630h16M628,630h4M744,630h8M364,634h8M404,634h20M440,634h12M632,634h.01M748,634h4M764,634h4M360,638h12M420,638h4M440,638h12M764,638h4M360,642h16M440,642h12M768,642h.01M360,646h8M396,646h.01M428,646h8M428,650h.01M420,654h.01M500,654h4M516,654h8M496,658h24M620,658h.01M848,658h4M960,658h.01M496,662h.01M512,662h8M616,662h4M844,662h8M904,662h.01M848,666h4M516,670h.01M608,670h4M688,670h4M844,670h4M320,674h4M516,674h.01M608,674h4M844,674h8M320,678h.01M460,678h.01M612,678h.01M688,678h.01M844,678h16M868,678h16M200,682h4M320,682h.01M852,682h32M200,686h8M324,686h.01M628,686h.01M772,686h8M852,686h32M200,690h8M628,690h4M772,690h12M852,690h28M1040,690h.01M200,694h8M476,694h.01M768,694h12M848,694h32M200,698h.01M476,698h.01M644,698h.01M768,698h8M844,698h36M888,698h.01M984,698h12M464,702h16M632,702h8M772,702h4M804,702h4M836,702h20M868,702h8M884,702h4M984,702h12M468,706h16M628,706h16M848,706h4M868,706h24M980,706h16M1032,706h.01"/>
</g>
<ellipse cx="600" cy="383" rx="40" ry="42" fill="#e4e7ec" filter="url(#blur8)"/>
<ellipse cx="686" cy="635" rx="14" ry="16" fill="#e9ebee" filter="url(#blur8)" opacity="0.8"/>
</g>
<polyline points="486,320 487.3,309 498.5,304.5 513.5,302.5 526,304.5 534,311 542,318 552,319 561,315" fill="none" stroke="#89d5ea" stroke-width="6.5" stroke-linejoin="round" stroke-linecap="round"/>
<polyline points="541,320 544,336 546,352 548,368" fill="none" stroke="#89d5ea" stroke-width="2" stroke-linecap="round"/>
<path d="M561,315 C570,330 580,343 594,351 S618,366 634,364 S650,360 662,350" fill="none" stroke="#a6dcef" stroke-width="1.8"/>
<polyline points="524,578 526,596 530,612" fill="none" stroke="#89d5ea" stroke-width="7" stroke-linecap="round"/>
<polyline points="592,516 593,528" fill="none" stroke="#89d5ea" stroke-width="3" stroke-linecap="round"/>
<ellipse cx="744" cy="287" rx="2" ry="6" fill="#8fd3ee"/>
<ellipse cx="922" cy="582" rx="5.5" ry="3.5" fill="#8fd3ee"/>
<ellipse cx="917" cy="575" rx="2.5" ry="3" fill="#8fd3ee"/>
<ellipse cx="794" cy="488" rx="6" ry="4" fill="#8fd3ee"/>
<ellipse cx="800" cy="482" rx="3" ry="3" fill="#8fd3ee"/>
<ellipse cx="715" cy="573" rx="2" ry="5" fill="#8fd3ee"/>
<ellipse cx="756" cy="346" rx="2" ry="4" fill="#8fd3ee"/>
<g clip-path="url(#landclip)" fill="none" stroke-linecap="round">
<path d="M751,334c-6,1 -7,-8 -14,-7M898,453c7,-6 1,-19 10,-24M625,690c-3,5 -8,6 -12,10M872,477c6,-4 12,-7 18,-8M967,590c-7,-1 -11,4 -14,9M645,638c-2,-2 -4,-3 -7,-4M862,518c4,-4 6,-10 13,-11M564,404c-3,1 -5,4 -8,6M731,257c2,-5 5,-8 10,-7M721,332c-1,-3 -4,-5 -6,-6M780,445c-4,3 1,9 -4,11M635,335c-1,-3 3,-6 0,-9M615,499c3,-1 4,-4 7,-4M604,448c1,5 5,7 9,9M615,450c0,-4 -2,-6 -4,-9M730,441c4,3 11,1 14,7M679,219c0,5 3,8 3,13M719,658c4,-2 10,-1 11,-6M561,334c-4,4 -9,1 -13,2M716,596c-2,3 -6,2 -7,6M702,461c-3,3 -6,1 -9,3M877,556c8,-2 14,5 22,6M632,669c-1,-3 -3,-5 -4,-8M697,624c3,1 6,3 6,6M858,639c5,-4 11,-2 16,-3M713,636c2,2 5,4 6,8M568,370c1,2 3,3 4,4M870,207c-6,2 -13,4 -18,9M487,550c-3,0 -6,-1 -8,0M767,590c-4,-5 -12,-1 -17,-6M963,513c4,5 10,6 15,9M657,502c2,4 -2,8 2,12M645,377c-2,-1 -4,-2 -6,-2M891,343c9,-2 15,2 19,10M763,638c-1,6 0,11 5,14M569,331c3,-2 3,-6 5,-8M590,329c4,0 7,-2 8,-5M619,558c2,3 -2,6 -1,10M699,651c-5,0 -7,-5 -12,-6M649,620c-1,-5 5,-7 5,-11M1010,616c-6,-8 -17,-3 -24,-8M705,327c-3,1 -7,1 -10,3M762,491c7,3 12,0 16,-5M565,395c3,0 5,-1 7,-3M569,379c-2,0 -4,0 -6,2M746,390c0,-5 0,-9 -3,-13M1010,616c2,9 -6,15 -6,23M628,279c3,-2 4,-5 4,-9M704,579c2,4 3,8 -1,12M573,386c1,2 -2,4 -1,6M618,408c2,2 3,5 1,8M779,528c-5,1 -10,1 -13,-3M547,588c-3,-3 -7,-5 -12,-4M671,611c-3,5 5,9 1,14M623,341c-1,2 -3,3 -4,4M631,416c-1,2 -1,4 -2,6M867,375c7,2 9,10 15,13M700,606c3,-1 6,-2 9,-4M619,558c1,3 6,3 7,7M746,618c-2,-6 -6,-6 -11,-8M847,413c-5,-5 -2,-12 -5,-18M697,624c4,2 8,-1 13,-1M618,408c2,1 5,1 6,3M577,476c1,5 6,5 9,9M588,320c-2,0 -5,-1 -7,1M704,579c-3,-2 -3,-7 -7,-9M646,266c4,-1 7,-1 10,-4M781,672c1,9 10,14 12,23M547,322c4,-2 7,0 9,3M614,620c3,2 0,6 2,8M606,351c1,2 2,3 2,5M647,326c3,0 4,2 7,3M750,480c-2,4 2,9 0,13M918,487c5,4 10,8 18,5M1011,528c5,4 2,11 6,16M637,677c4,-2 7,-1 10,1M565,516c-4,2 -7,1 -10,-2M657,357c0,2 1,5 1,7M720,418c-4,4 -1,8 -1,12M845,462c7,2 14,2 21,0M596,311c2,-3 6,0 8,-3M704,579c5,0 6,6 10,8M698,505c-2,3 -3,6 -4,8M628,406c1,-2 2,-4 3,-5M608,356c-2,-1 -4,0 -5,0M647,198c-2,4 -8,1 -10,5M641,340c-2,2 -1,5 -2,8M663,243c0,-5 -2,-9 -7,-10M775,229c-5,0 -9,2 -11,6M699,555c2,3 3,5 4,8M953,599c2,-8 0,-14 -7,-19M567,389c-2,0 -4,-2 -5,-3M537,596c2,1 5,2 6,5M590,523c2,-3 5,-4 9,-2M701,248c0,-4 -2,-7 1,-11M705,327c-2,-3 -3,-8 -7,-10M865,395c-6,-1 -5,-10 -12,-10M561,622c3,4 9,-1 12,4M619,472c2,2 2,5 5,6M625,585c4,1 6,3 6,7M573,626c-1,5 5,6 4,10M833,538c3,5 -2,12 3,17M641,389c-2,1 -3,2 -3,4M494,555c3,-1 2,-6 5,-8M917,526c-5,-3 -7,-8 -5,-14M586,288c3,1 5,3 4,7M613,457c1,2 4,3 4,6M594,411c1,1 3,2 4,3M732,480c6,-1 11,-3 18,0M958,566c-5,4 -4,13 -12,14M1002,451c-6,-6 -13,-9 -18,-15M940,698c-6,-6 -14,1 -21,-5M555,487c2,3 7,2 8,6M525,511c-3,-6 -11,-6 -12,-13M595,398c-2,-2 1,-5 -1,-7M621,521c-1,-5 3,-8 7,-12M829,474c-5,3 -12,2 -17,7M632,270c2,-2 1,-5 2,-8M710,240c-3,0 -6,-2 -8,-3M626,329c-2,-2 -6,-2 -7,-6M676,436c-3,2 -6,3 -10,2M687,324c4,-1 8,-2 11,-7M643,240c3,1 7,0 9,4M598,324c3,-2 4,-6 6,-9M628,406c2,3 6,0 8,3M764,271c-5,-3 -11,-2 -15,-6M576,527c-2,4 2,6 3,10M673,413c3,-1 4,-4 8,-5M498,561c3,0 6,-1 7,-3M998,678c-8,2 -16,-1 -23,-5M614,245c-3,1 -6,-2 -8,-1M701,299c-2,-2 -1,-6 -5,-9M762,491c5,3 11,5 15,9M589,654c-3,3 -1,7 -4,10M684,206c4,0 5,-4 9,-5M726,316c-3,-2 -3,-6 -7,-7M583,300c0,-4 1,-8 3,-12M654,522c3,-2 3,-5 5,-8M638,485c-2,-2 -6,-3 -6,-7M674,380c4,-1 5,5 10,4M935,673c-2,9 -11,13 -16,20M589,365c1,-2 0,-4 1,-6M650,652c0,-5 5,-6 8,-9M643,360c3,-1 5,1 6,3M872,283c6,5 2,13 4,19M633,453c1,-2 4,-4 6,-5M645,369c2,-2 1,-5 4,-6M609,284c-3,-3 -7,1 -10,-1M877,606c5,6 12,8 20,8M558,568c-3,4 1,8 -1,13M636,402c2,1 4,0 6,1M518,609c1,3 0,7 0,10M587,395c2,2 4,4 4,8M706,549c1,-6 4,-9 10,-11M683,520c0,6 -5,8 -8,11M611,321c-2,-3 -6,-2 -7,-6M764,690c4,2 9,1 13,3M598,472c4,-1 5,4 9,3M716,512c0,4 4,8 2,12M708,529c2,-3 1,-7 2,-11M512,522c1,-2 4,-4 3,-7M758,431c-6,3 -11,0 -17,0M789,575c5,2 11,1 17,0M631,305c2,1 5,1 8,2M798,300c-4,-7 -15,-3 -19,-11M627,462c3,0 4,4 8,4M810,452c6,-4 12,1 18,0M663,616c3,-4 2,-9 3,-13M718,680c-1,-5 -5,-8 -4,-14M624,360c-2,1 -5,1 -5,4M649,336c-4,1 -4,-4 -8,-4M622,495c-3,3 -3,6 -1,10M641,389c1,-2 1,-4 3,-6M710,281c-2,-5 -6,-6 -11,-6M617,299c-2,-3 -5,-3 -8,-3M561,334c3,3 6,6 8,10M497,534c1,4 6,3 9,6M757,508c-5,3 -5,7 -4,12M525,511c-3,-2 -5,-6 -10,-5M568,646c2,-2 2,-5 1,-8M571,661c-1,-3 0,-5 3,-7M893,590c6,-2 8,-8 9,-13M992,592c-6,3 -8,8 -6,16M623,432c-2,2 -5,-1 -8,1M644,608c2,-3 0,-8 3,-11M561,682c-2,3 -5,4 -8,6M582,568c3,-1 5,-3 8,-5M516,534c-4,1 -8,2 -10,6M714,587c3,-3 4,-7 6,-11M570,611c3,-2 4,-7 8,-7M619,323c0,3 1,6 1,10M728,279c5,-2 7,-5 7,-11M586,451c-3,-1 -5,-5 -9,-5M660,429c2,3 6,5 6,9M740,224c4,-4 9,-7 15,-6M665,552c-5,-2 -9,5 -14,3M700,340c3,3 4,6 2,10M790,379c-2,6 -8,7 -12,10M600,458c0,3 -1,5 -4,7M606,467c-1,3 2,5 1,8M564,656c3,0 6,-1 10,-2M694,422c5,1 9,0 12,-5M722,391c-3,3 -7,6 -12,5M563,381c1,2 -1,3 -1,5M586,555c1,3 1,6 4,8M715,470c1,5 0,10 -2,14M924,313c4,-8 -6,-13 -5,-20M679,497c0,-5 -4,-7 -9,-9M780,445c-5,5 -12,-1 -17,2M825,385c4,6 12,5 17,10M556,340c-4,-3 -5,-7 -9,-11M999,508c-2,-8 6,-11 8,-17M653,433c2,-2 5,-1 7,-4M820,323c8,2 15,-4 22,-4M648,446c3,-1 3,-3 5,-6M515,581c-1,-3 -3,-6 -7,-7M759,390c-4,3 -7,7 -5,13M587,438c-1,-3 0,-5 1,-7M625,286c-1,-3 3,-5 3,-7M697,570c3,-1 2,-6 6,-7M629,374c2,-2 4,-3 6,-2M613,234c2,-4 3,-7 6,-11M695,674c4,-1 8,0 11,3M542,541c-1,2 -1,5 -2,8M637,367c-1,-2 0,-4 0,-5M600,458c-2,-1 -1,-5 -4,-6M616,481c1,-3 0,-6 3,-9M624,272c-3,-1 -4,-4 -8,-4M773,474c5,-5 0,-12 3,-18M693,443c4,0 6,2 9,5M669,428c4,1 3,7 7,8M727,520c4,2 9,3 14,-1M893,486c3,-6 -3,-11 -3,-17M637,626c-4,-2 -5,-5 -6,-9M649,336c3,-2 5,1 8,2M597,354c-2,2 0,5 0,8M581,349c-1,-3 0,-6 -1,-9M681,408c-3,-1 -5,-4 -8,-5M953,599c-6,1 -8,7 -14,7M577,416c1,2 1,5 4,6M690,283c-5,-3 -6,-8 -6,-13M694,596c-3,1 -6,3 -8,6M919,693c-1,-6 -3,-11 -1,-17M600,552c4,0 5,4 7,6M624,262c-4,1 -6,3 -8,6M882,673c4,7 15,7 16,17M606,618c-3,1 -6,1 -8,-2M798,329c7,3 11,8 12,16M646,300c-5,1 -4,7 -7,7M728,279c3,4 8,6 9,10M592,511c4,2 5,6 7,10M749,534c-5,2 -5,8 -7,12M839,369c6,4 6,14 14,16M654,386c4,0 5,-4 8,-5M590,329c2,3 4,3 7,3M590,620c3,0 5,-1 8,-4M592,425c0,3 4,4 5,6M774,344c-2,4 -5,7 -8,10M560,558c3,1 5,3 7,6M562,422c2,-2 5,-1 7,-4M759,344c5,-2 10,-2 15,0M845,462c-3,7 -12,6 -16,12M609,343c-2,-1 -3,1 -5,2M762,463c5,-2 10,-3 14,-7M648,492c-3,2 -5,2 -9,1M573,595c2,1 5,1 8,1M512,522c2,-2 5,-2 8,0M751,334c-4,5 -11,2 -14,7M567,408c2,1 3,0 6,-1M620,232c-2,1 -5,1 -7,2M516,534c-3,-2 -5,-3 -9,-3M556,325c-3,2 -6,3 -9,4M801,509c1,-6 3,-11 -2,-16M515,570c2,3 0,7 0,11M824,518c1,-6 -4,-11 -4,-17M572,314c0,-4 3,-6 5,-10M733,596c2,-5 -3,-8 -2,-13M704,579c-5,-2 -10,-1 -14,2M999,508c-3,-5 -8,-8 -7,-15M548,526c1,3 -1,7 1,10M735,268c4,-3 9,-5 14,-3M639,493c-1,-3 0,-5 -1,-8M714,666c-3,3 -7,-1 -11,2M600,486c1,4 6,5 7,8M737,672c7,-2 11,4 17,5M582,568c-3,1 -3,5 -6,7M793,427c-5,5 -12,9 -13,18M626,398c-2,2 -4,1 -7,2M683,253c-3,-2 -5,-6 -10,-6M749,421c-4,2 -7,5 -8,10M547,682c3,1 3,4 6,6M707,476c2,-2 4,-6 8,-6M812,415c0,7 0,15 5,21M677,359c0,3 -1,6 -4,7M631,305c-2,2 -5,4 -5,7M598,563c-3,-1 -5,1 -8,0M638,291c5,-1 7,-5 10,-9M540,576c3,-3 7,-1 10,-2M516,534c1,3 0,5 1,8M672,643c-2,3 -5,5 -8,7M625,286c4,-2 6,-5 10,-6M849,546c-4,3 -7,9 -13,9M779,419c-3,-6 1,-12 -2,-17M985,639c-4,8 0,15 4,23M623,341c-4,2 -2,6 -4,10M690,398c3,-1 6,-3 9,-2M898,690c9,-2 17,-4 20,-14M714,587c6,2 10,-4 17,-4M609,487c1,-4 -3,-8 -2,-12M779,330c-1,-4 -3,-8 -2,-13M638,485c-1,3 -5,1 -7,3M839,369c-5,1 -10,3 -16,0M743,688c6,-1 5,-9 11,-11M754,355c-4,-2 -8,-1 -12,-3M858,639c4,-6 -5,-10 -2,-16M617,532c-3,2 -6,1 -8,0M568,363c-3,0 -4,-2 -5,-4M757,508c8,0 14,-2 20,-8M919,693c-8,2 -13,-6 -21,-3M584,400c0,2 0,4 -3,6M657,338c2,2 3,4 4,6M632,351c-2,-1 -3,1 -5,2M697,266c6,1 11,-2 16,-4M600,552c1,4 0,7 -2,11M757,508c-4,-3 -9,-1 -13,-3M597,580c3,2 4,6 7,8M666,362c-3,0 -6,-1 -8,2M542,497c0,-5 2,-8 5,-12M615,499c-3,-1 -5,2 -7,3M562,422c0,4 2,6 6,7M730,301c-4,2 -7,6 -11,8M618,673c-3,-2 -7,0 -10,-1M708,386c-2,4 -1,7 2,10M711,650c3,-1 4,-6 8,-6M579,392c2,-1 3,-4 6,-5M579,468c2,-3 2,-7 4,-10M583,300c-3,-1 -3,4 -6,4M560,643c0,3 0,5 -3,7M880,689c-7,-3 -12,-9 -16,-16M997,625c5,-2 6,-9 13,-9M559,535c-3,1 -6,-2 -10,1M634,543c-3,0 -4,3 -7,4M840,663c-2,6 4,12 -1,18M632,669c0,-5 6,-5 7,-9M669,386c-3,0 -5,2 -7,2M773,474c6,0 12,1 17,5M695,330c4,-4 -1,-9 3,-13M598,472c-2,-2 -1,-5 -2,-7M569,379c-3,0 -4,-3 -6,-5M515,581c1,5 4,10 2,15M724,668c-1,-4 -4,-6 -5,-10M992,592c-3,-7 3,-15 -3,-21M548,552c-3,1 -5,-1 -8,-3M667,197c-3,1 -7,2 -11,0M554,679c-1,3 -1,6 -1,9M646,224c2,-3 3,-6 6,-9M663,395c-2,-1 -5,-1 -8,-1M581,422c1,-2 1,-5 4,-7M684,616c2,6 -3,10 -5,15M639,569c-1,3 -1,5 -1,9M674,652c-3,-2 -7,0 -10,-2M833,600c8,-2 10,10 18,8M971,390c0,7 9,8 9,15M649,620c-3,-2 -5,-5 -9,-6M497,534c-3,-2 -5,-3 -8,-2M601,338c-2,1 -5,1 -8,1M766,577c4,-3 10,-3 12,-9M732,480c4,4 6,8 4,14M696,230c-1,-3 -2,-6 0,-9M773,211c-3,-5 -5,-9 -9,-14M580,340c-3,2 -7,4 -11,4M634,543c5,-2 6,-7 6,-12M684,270c-3,0 -7,2 -11,-1M880,453c4,5 3,13 10,16M597,354c0,-2 1,-4 3,-4M555,487c-3,1 -5,-4 -8,-2M904,649c4,5 -1,12 2,17M607,524c-2,-1 -4,-5 -8,-3M618,546c-2,-1 -5,-1 -9,-1M550,669c-2,-2 -4,-5 -8,-5M642,314c4,0 8,1 11,5M576,277c3,4 -2,8 2,11M945,343c3,-7 -6,-13 -3,-21M616,279c3,-4 1,-7 0,-11M637,510c-3,-3 -2,-8 -6,-9M612,304c-2,-2 0,-5 -3,-8M935,439c-1,7 -7,10 -11,14M682,333c-3,0 -6,-2 -9,-4M560,558c2,4 1,7 -2,10M572,314c2,3 5,5 9,7M1013,598c1,7 0,13 -3,18M796,464c-5,-5 -14,-1 -20,-8M549,699c3,1 5,0 8,1M620,634c-4,3 -6,6 -6,11M613,353c2,-1 5,-1 6,-2M710,396c-3,-2 -7,0 -11,0M672,643c-6,-1 -8,-6 -11,-12M919,293c-9,2 -16,-9 -26,-3M609,393c-3,1 -4,3 -5,6M687,534c-4,-2 -7,-4 -12,-3M653,440c-2,-3 -6,-3 -7,-6M548,552c3,-1 5,1 8,0M795,653c5,4 7,10 4,17M628,406c-2,-2 -4,-1 -7,-1M577,416c-1,-2 0,-4 0,-6M706,549c3,5 7,4 11,4M797,197c-5,8 -2,15 1,22M569,357c0,2 -2,4 -1,6M604,407c2,2 6,1 8,3M578,616c-4,2 -1,7 -5,10M597,699c-2,-2 -5,0 -8,-1M592,425c-1,2 -2,5 -4,6M788,550c-7,-1 -10,6 -17,9M705,687c4,4 4,10 8,14M769,381c1,5 4,7 9,8M557,700c-4,-3 -2,-8 -4,-12M764,690c5,-2 2,-8 6,-12M756,546c0,5 -2,9 -5,14M573,402c1,-2 3,-3 6,-4M584,546c3,2 -1,6 2,9M632,695c-2,2 -4,4 -7,4M663,697c2,-4 6,-8 10,-11M612,652c3,4 1,7 0,12M597,344c0,-2 -3,-3 -4,-5M631,617c2,-3 6,0 9,-3M601,338c2,2 2,4 3,7M542,541c1,-4 6,-2 7,-5M583,519c-1,4 -3,7 -7,8M603,441c-1,2 0,5 1,7M658,207c1,-4 -3,-6 -2,-10M750,637c-4,2 -6,5 -9,9M724,368c5,1 8,-4 12,-3M668,675c-3,-3 -8,0 -11,-2M556,410c0,-2 0,-5 0,-7M550,669c0,4 5,6 4,10M883,362c7,-2 10,7 17,6M558,660c3,-1 5,-2 6,-4M641,332c-1,-3 -4,-4 -6,-6M747,308c7,-1 5,-10 12,-11M612,337c0,-4 -5,-5 -5,-10M716,512c4,2 8,4 11,8M756,253c-5,0 -10,-2 -15,-3M597,344c0,2 3,3 3,6M573,595c-2,3 -6,5 -8,8M696,290c3,-3 7,-2 11,-1M750,465c4,-2 8,0 12,-2M517,596c-1,-2 -1,-5 -3,-7M779,419c-6,-3 -12,-1 -19,-3M974,420c5,1 10,-3 16,0M657,483c-3,-4 -1,-8 0,-12M661,660c-3,2 -6,1 -9,1M751,560c-5,-3 -5,-10 -9,-14M586,410c1,2 0,3 -1,5M604,407c2,1 3,-1 5,-1M705,491c3,-5 -1,-10 2,-15M949,645c2,6 -6,10 -4,17M829,582c6,-2 11,-2 17,0M592,511c-5,0 -5,5 -9,8M833,208c8,0 11,10 19,8M563,493c3,2 6,2 9,4M570,436c3,-1 3,-4 5,-6M966,642c-6,2 -11,2 -17,3M858,639c6,5 4,12 7,18M578,604c-4,-3 -9,2 -13,-1M573,402c-1,-2 2,-3 1,-5M731,257c-3,3 -4,9 -9,10M584,576c1,3 0,7 -1,10M757,508c7,3 6,11 9,17M715,199c1,5 0,9 4,13M734,561c5,-4 3,-11 8,-15M647,483c0,5 -6,6 -8,10M818,540c3,-7 7,-14 6,-22M601,529c3,-1 5,3 8,3M619,558c-4,1 -8,1 -12,0M581,422c0,2 2,5 1,7M715,199c0,8 -7,11 -12,15M556,340c0,3 -3,5 -3,9M668,675c-2,3 -5,5 -4,9M626,398c-2,0 -2,-2 -4,-3M799,631c8,4 16,-4 24,-1M597,344c2,2 5,1 7,1M690,283c2,-4 8,-3 9,-8M560,643c0,-3 -2,-5 -5,-7M591,416c-2,1 -2,4 -4,5M817,436c0,8 4,13 11,16M652,661c-4,-2 -8,1 -13,-1M592,425c1,-2 3,-1 5,-2M509,551c4,-3 7,-2 11,0M796,532c-5,-1 -12,1 -17,-4M641,410c2,-2 -1,-4 1,-7M963,513c-7,0 -9,7 -14,10M589,383c-1,2 -2,3 -4,4M615,576c-4,-2 -3,-6 -5,-9M609,254c3,0 7,1 10,-2M610,567c1,-3 -1,-6 -3,-9M696,230c4,3 7,-1 11,-1M756,546c2,-5 8,-3 10,-7M837,269c11,-6 13,-15 12,-27M533,517c2,-2 1,-5 3,-8M634,343c0,-3 -2,-5 1,-8M636,429c4,0 7,-3 9,-6M571,351c3,-1 4,3 6,4M856,497c-8,1 -11,8 -15,12M617,358c1,-2 3,-1 4,-2M559,523c3,0 6,2 9,0M619,382c-1,2 -3,5 -2,8M643,462c-3,1 -6,1 -8,4M700,606c-4,-2 -4,-7 -6,-10M714,692c0,3 0,6 -1,9M581,381c2,-1 5,-1 7,-4M788,550c1,8 -3,14 -10,18M617,390c-2,1 -4,0 -5,-2M808,362c-5,-2 -10,-1 -16,-1M543,518c-1,4 4,5 5,8M621,521c4,-2 8,-5 13,-3M665,350c0,-3 -2,-4 -4,-6M746,390c-6,0 -10,3 -13,9M974,420c-9,-4 -17,4 -25,3M947,548c-6,4 -12,8 -19,5M575,430c-1,-2 0,-4 0,-7M587,421c-2,-1 0,-4 -2,-6M645,377c-1,-3 2,-5 0,-8M548,656c4,0 7,2 10,4M632,389c0,-2 -1,-4 1,-6M631,530c1,4 2,9 3,13M600,498c2,3 6,1 8,4M833,600c-4,4 -8,8 -11,13M765,608c4,3 5,8 5,13M726,316c-2,5 -8,5 -11,10M556,395c1,2 2,4 4,5M879,572c4,-8 14,-3 20,-10M575,560c-2,-3 -5,-2 -7,-4M576,527c-4,0 -6,2 -8,6M714,587c-2,3 4,5 2,9M607,524c1,3 3,5 2,8M596,601c3,0 5,-4 8,-5M705,491c3,-1 6,-3 8,-7M581,406c-2,-2 -2,-5 -2,-8M547,588c4,-2 9,0 13,1M788,550c3,-6 6,-12 8,-18M901,393c1,-8 0,-17 -1,-25M963,513c5,-3 11,-6 16,-9M613,382c1,2 -1,4 -1,6M901,393c6,-4 13,0 19,-4M758,368c1,-5 1,-9 -4,-13M621,655c2,3 6,3 7,6M522,558c-2,1 -5,3 -8,3M625,449c-3,1 -3,4 -4,6M653,273c-1,-4 -5,-5 -7,-7M577,446c-3,-1 -6,-1 -9,-2M621,505c3,-2 7,0 10,-4M638,382c-2,-1 -3,0 -5,1M596,601c-4,3 0,8 -4,11M886,528c-4,-7 -12,-11 -11,-21M781,513c-2,-4 -2,-9 -4,-13M886,438c1,8 11,7 12,15M576,527c-3,1 -6,-1 -8,-4M607,419c2,0 5,0 7,2M973,475c2,-9 7,-15 12,-23M607,524c-2,1 -4,3 -6,5M707,426c-3,-3 0,-6 -1,-9M648,282c3,0 7,1 10,0M641,439c-3,1 -5,0 -7,-3M730,441c-4,-4 -8,-3 -12,-2M543,613c4,-2 2,-7 7,-8M621,505c1,3 -2,5 -2,8M652,402c1,-3 0,-6 3,-8M663,243c3,2 8,0 10,4M680,660c0,3 1,6 2,10M579,468c-4,-2 -6,-5 -7,-10M598,563c3,-1 6,-3 9,-5M941,509c-4,-5 -2,-11 -5,-17M636,429c-1,-4 -3,-6 -7,-7M613,609c5,-1 6,5 10,5M751,334c3,-5 0,-9 -2,-13M953,477c5,5 10,11 14,16M693,201c-5,1 -8,-3 -12,-4M668,320c-3,-3 -4,-6 -3,-9M619,364c-2,0 -3,3 -6,3M781,672c-4,1 -8,4 -11,6M606,351c0,-2 -1,-4 -2,-6M669,519c-3,-2 -8,-1 -10,-5M578,288c-3,1 -6,-1 -9,0M764,668c-2,4 -5,7 -10,9M735,610c-3,-3 -9,0 -11,-5M656,566c-4,3 -2,9 -7,12M663,616c-4,-1 -4,-7 -9,-7M760,416c1,-5 -5,-8 -6,-13M722,267c2,4 4,7 6,12M619,351c2,1 3,3 2,5M895,508c-6,2 -13,-1 -20,-1M915,614c7,3 14,8 22,10M678,451c-3,-1 -5,-5 -9,-4M694,422c-2,-3 -2,-7 -5,-10M872,283c-5,9 -12,14 -23,14M845,462c-3,-7 -8,-11 -17,-10M633,641c3,-2 2,-5 5,-7M624,478c1,3 1,6 -1,9M572,684c2,-2 2,-5 3,-8M542,497c-3,1 -6,1 -9,-2M671,611c-2,-2 -5,-4 -5,-8M646,224c-3,-2 -8,1 -11,-2M555,636c-1,-3 -2,-5 -5,-6M918,487c2,6 8,10 7,17M644,608c-1,-5 -6,-5 -9,-7M596,465c-3,-2 -6,1 -9,1M924,453c6,-2 12,-5 18,1M565,547c2,3 5,4 10,3M573,368c2,0 3,2 5,2M624,262c2,3 1,6 0,10M596,536c1,-3 2,-5 5,-7M852,216c-3,-6 -2,-12 -2,-19M594,375c-2,0 -5,0 -6,2M578,604c2,1 4,3 6,4M646,300c3,-3 5,-6 9,-8M577,669c-2,2 -2,5 -2,7M627,353c1,-2 2,-3 2,-6M688,214c5,1 10,0 15,0M705,687c-1,-4 3,-6 1,-10M592,348c1,-1 3,-3 5,-4M580,340c-1,-2 -2,-5 -3,-6M942,454c0,8 -8,10 -11,16M658,540c3,-3 3,-7 3,-11M704,579c2,-2 5,-4 7,-7M585,628c2,2 4,3 7,5M923,632c-8,1 -16,2 -24,1M481,541c-2,2 -3,5 -2,9M556,340c3,2 6,4 6,8M690,664c-3,-2 -6,-5 -10,-4M958,685c7,3 5,12 13,14M586,451c1,3 4,3 5,6M549,643c-3,-2 -4,-5 -6,-7M641,389c2,3 1,5 1,8M885,405c5,3 11,4 16,7M935,673c5,-3 10,-5 10,-11M653,273c3,-3 3,-7 3,-11M739,411c4,-5 11,-4 15,-8M706,660c1,3 -3,5 -3,8M852,692c-7,-1 -6,-11 -13,-11M602,419c2,-1 4,-1 5,0M667,291c1,4 -4,5 -3,10M669,519c-2,3 -6,5 -8,10M625,598c0,-3 4,-4 6,-6M620,376c3,0 5,4 7,6M669,447c0,-3 0,-6 -3,-9M949,645c6,3 9,8 13,14M996,545c0,9 3,16 12,19M644,208c-4,0 -8,0 -12,2M575,504c-3,-2 -2,-5 -3,-7M884,650c-3,-5 -3,-11 -10,-14M647,514c4,0 8,-3 12,0M937,395c-7,1 -11,-5 -17,-6M974,420c-3,-6 -6,-11 -13,-11M703,699c3,3 6,2 10,2M820,501c5,-4 9,-9 16,-8M581,349c1,-2 4,-3 5,-5M619,400c1,-1 1,-3 3,-5M597,580c5,0 8,3 13,3M698,409c6,0 12,4 18,0M590,592c-1,-4 -4,-5 -7,-6M780,445c6,1 11,1 17,-3M735,610c6,-1 4,-9 9,-11M605,385c2,1 5,0 7,3M556,614c-2,-3 -2,-7 -6,-9M716,289c7,4 14,6 21,0M936,492c6,-1 9,6 15,5M607,366c-3,0 -4,2 -6,4M906,497c1,5 1,11 6,15M515,515c3,1 3,4 5,7M723,348c-3,-5 1,-11 -2,-16M574,323c-2,-3 -6,-2 -8,-5M581,381c0,2 -1,3 -1,5M616,481c2,-2 4,-3 8,-3M630,359c1,-2 4,-2 6,-4M678,451c0,3 0,6 3,9M596,311c-4,-1 -2,-6 -5,-8M612,652c3,0 6,2 9,3M724,668c-3,-2 -8,1 -10,-2M564,669c4,-1 3,-6 7,-8M751,334c1,5 6,6 8,10M627,254c1,4 3,7 7,8M568,573c-1,-3 -2,-6 -1,-9M855,360c-3,8 4,16 -2,25M609,272c-3,0 -5,1 -7,3M614,620c3,-2 7,-1 9,-6M642,403c-1,-2 -1,-4 0,-6M781,513c-7,0 -9,9 -15,12M753,520c4,4 9,1 13,5M636,402c1,-2 3,-4 6,-5M719,658c-3,2 -5,4 -5,8M719,658c-4,-1 -3,-7 -8,-8M779,289c-5,1 -10,-3 -15,-4M628,406c-3,1 -4,2 -4,5M630,572c-3,-2 -4,-4 -4,-7M698,642c3,3 2,6 1,9M667,474c-2,-4 -1,-9 1,-13M555,381c-1,3 0,5 3,7M846,526c-1,7 -9,7 -13,12M596,601c1,3 3,5 5,6M682,542c0,-5 -8,-6 -7,-11M629,374c1,1 2,3 3,4M625,598c4,0 6,3 10,3M573,386c2,-1 4,-1 7,0M601,291c2,2 4,6 8,5M591,542c-3,0 -4,4 -7,4M632,394c1,3 -1,5 -1,7M792,361c4,-6 1,-12 -2,-17M616,628c-3,2 -6,-2 -9,0M597,362c-2,-1 -5,0 -7,-3M550,630c-3,1 -4,4 -7,6M764,317c-6,-1 -11,-1 -15,4M723,348c-4,1 -7,-2 -11,-1M568,646c4,1 2,6 6,8M716,512c0,-6 -9,-5 -9,-12M562,348c-3,2 -6,-1 -9,1M799,631c-6,2 -11,2 -15,-3M626,623c1,-3 3,-4 5,-6M669,561c3,-1 5,-3 7,-5M676,556c-1,-4 0,-8 -3,-11M665,552c1,-4 7,-3 8,-7M965,436c-1,8 -7,15 -6,24M568,646c3,2 6,2 9,0M593,369c0,2 0,4 1,6M595,398c0,2 -2,4 -4,5M596,452c-2,2 -5,2 -5,5M718,619c5,-3 5,-9 6,-14M562,506c1,-5 6,-7 10,-9M682,542c-3,2 -5,4 -9,3M703,214c2,3 5,6 10,6M858,448c-4,-6 -5,-11 0,-17M750,465c1,5 3,10 0,15M753,696c-5,0 -7,5 -12,5M940,698c-10,-4 -19,-10 -22,-22M705,327c2,-5 3,-9 1,-15M639,698c-5,0 -10,-1 -14,1M618,589c-4,-1 -4,-5 -8,-6M599,571c-4,-1 -5,-6 -9,-8M665,591c1,4 1,8 1,12M710,455c-3,-1 -4,-6 -8,-7M647,198c6,0 7,8 11,9M649,336c-2,-3 -3,-7 -2,-10M602,649c1,4 -1,7 1,12M696,486c-2,3 -2,7 -2,10M635,601c-2,3 -1,7 -3,9M996,545c7,5 13,-4 21,-1M661,660c-1,-4 3,-7 3,-10M869,319c-3,6 -8,8 -13,12M694,422c4,2 10,0 13,4M852,692c9,-3 9,-12 12,-19M810,452c-7,1 -7,-9 -13,-10M618,316c4,1 5,-2 8,-4M654,458c4,3 -1,9 3,13M586,485c-3,-1 -5,0 -8,0M876,589c-1,-6 6,-11 3,-17M596,677c-4,0 -5,-4 -8,-5M715,326c-3,3 -4,6 -3,11M874,342c-1,-8 2,-17 -5,-23M1008,564c-1,5 3,11 1,17M698,505c-4,1 -7,-2 -11,-1M718,619c4,3 8,7 7,13M766,577c-6,0 -11,3 -16,7M653,369c2,-1 3,-4 5,-5M630,319c5,1 9,0 12,-5M550,630c-2,-3 -1,-6 1,-9M674,652c5,0 8,-6 13,-7M872,283c8,-1 13,6 21,7M755,218c-2,-9 9,-12 9,-21M775,260c-4,-3 -4,-8 -5,-12M607,524c4,2 9,3 10,8M587,466c2,-3 0,-7 4,-9M808,591c-4,-5 0,-11 -2,-16M591,490c-1,-4 -1,-9 -2,-13M897,614c4,6 2,12 2,19M696,230c-4,2 -3,8 -7,10M658,601c3,1 6,0 8,2M893,486c2,-9 11,-8 17,-13M697,570c5,-2 9,0 14,2M586,288c-3,2 -5,1 -8,0M905,309c-7,2 -13,6 -17,12M708,614c-2,4 3,6 2,9M522,558c1,-3 -3,-5 -2,-7M876,302c5,-4 10,-9 17,-12M653,369c0,2 0,5 0,7M560,690c-2,-3 1,-5 1,-8M798,300c-3,11 -17,8 -21,17M613,609c-1,4 2,7 1,11M974,619c-1,9 12,11 11,20M550,669c-3,1 -6,3 -7,7M714,299c0,4 3,7 5,10M947,548c-2,-8 -13,-5 -14,-14M595,398c-3,0 -6,-2 -8,-3M638,230c1,-4 4,-6 8,-6M667,507c4,3 8,4 13,3M678,451c0,-4 5,-6 6,-10M743,199c-5,0 -10,2 -14,5M548,336c-1,5 0,9 5,13M688,214c1,-4 3,-9 5,-13M770,306c5,2 3,8 7,11M657,673c-2,3 -7,2 -10,5M560,558c-3,-1 -2,-5 -4,-6M793,427c-4,6 -11,5 -18,7M573,368c1,3 0,5 -1,6M591,642c0,-3 2,-6 1,-9M568,573c3,3 3,8 7,10M617,463c3,-2 0,-7 4,-8M591,490c4,1 7,-1 9,-4M632,210c1,-2 5,-3 5,-7M828,350c-7,3 -12,-6 -18,-5M616,260c2,3 -2,6 0,8M586,485c1,-3 4,-5 3,-8M808,388c-5,-4 -14,-3 -18,-9M612,664c-1,3 -3,6 -4,8M675,259c2,-2 5,-4 8,-6M560,367c2,-2 4,-4 3,-8M625,690c-1,3 1,6 0,9M817,651c-7,7 -15,2 -22,2M870,207c-12,8 -25,9 -37,1M567,278c1,3 0,6 2,10M506,504c0,4 -3,8 0,12M701,248c3,0 7,0 10,2M673,582c-1,4 -4,7 -8,9M619,472c3,1 6,0 8,-1M605,413c-2,2 -5,0 -7,1M862,535c-8,1 -12,-5 -16,-9M540,576c-3,2 -4,5 -5,8M648,492c-2,-4 -5,-6 -10,-7M682,367c-3,-1 -6,0 -9,-1M565,395c1,-2 2,-4 2,-6M619,382c-2,-1 -3,-1 -6,0M607,494c1,2 0,5 1,8M614,245c2,2 1,5 5,7M694,596c3,-2 7,-2 9,-5M635,372c1,-2 0,-4 2,-5M512,522c-2,3 -1,7 -5,9M573,386c-3,0 -4,2 -6,3M707,229c1,-4 3,-6 6,-9M627,462c-2,3 0,6 0,9M679,395c-2,-1 -6,0 -7,-2M586,410c-2,-1 -4,-2 -5,-4M611,362c0,-2 -2,-3 -3,-6M740,224c-6,-2 -11,-5 -17,-1M646,351c-3,0 -4,-3 -7,-3M644,250c-3,2 -6,2 -9,5M882,388c-4,6 -11,6 -17,7M984,436c4,-5 0,-12 6,-16M571,351c1,-3 -2,-5 -2,-7M763,638c-4,2 -8,-1 -13,-1M535,567c3,2 2,7 5,9M707,426c5,-2 9,-1 12,4M812,415c5,4 10,6 16,6M609,393c2,0 3,2 4,4M668,408c-2,-4 -5,-5 -9,-7M630,364c2,-1 5,0 7,-2M609,487c2,-2 4,-4 7,-6M570,436c3,0 6,3 9,0M915,614c-6,5 -12,4 -18,0M626,221c-3,-1 -5,2 -7,2M795,653c2,-7 5,-14 4,-22M542,497c4,2 3,6 4,8M483,557c1,-2 3,-4 4,-7M990,474c5,7 16,6 17,17M590,329c-2,-3 -5,-6 -9,-8M610,583c-2,-2 -4,-5 -4,-8M644,608c3,3 7,-1 10,1M597,580c3,-3 2,-6 2,-9M779,592c-7,-2 -5,-13 -13,-15M569,357c-2,0 -5,0 -6,2M923,415c-7,3 -12,7 -15,14M590,329c1,3 5,5 3,10M691,452c4,0 6,-6 11,-4M581,381c2,1 5,0 8,2M659,446c4,-1 7,1 10,1M644,250c-2,-2 -5,-4 -7,-5M582,680c-3,0 -4,-3 -7,-4M718,619c-3,1 -7,1 -8,4M713,636c4,-2 9,-1 12,-4M727,694c3,6 9,4 14,7M754,677c5,-2 10,2 16,1M634,343c-1,3 -4,3 -5,4M730,441c-4,-3 -6,-8 -11,-11M996,545c-6,2 -11,-5 -16,-4M687,534c-5,-4 -1,-10 -4,-14M497,534c-6,0 -11,-2 -13,-9M522,530c-1,-3 -2,-5 -2,-8M637,677c2,2 2,6 3,8M735,532c1,6 -6,8 -7,13M565,547c2,-2 5,-4 9,-5M659,446c-2,-2 -3,-5 -6,-6M736,365c4,3 4,8 7,12M581,596c-1,-4 3,-6 2,-10M634,343c1,2 4,2 5,5M620,682c3,-1 5,-2 8,-1M720,576c-3,-2 -6,-3 -9,-4M574,397c-1,-1 0,-4 -2,-5M975,673c-1,-8 -10,-8 -13,-14M697,570c-4,-6 -1,-11 2,-15M717,553c2,-5 9,-4 11,-8M667,474c-4,0 -7,0 -10,-3M611,362c1,-3 3,-3 6,-4M662,373c1,3 -1,5 0,8M924,453c3,6 1,13 7,17M737,341c1,-5 -3,-9 0,-14M554,679c0,6 -6,8 -8,12M603,661c5,-1 4,-7 9,-9M583,300c3,-1 5,3 8,3M583,358c-1,-2 -3,-3 -6,-3M667,474c4,0 5,-5 9,-6M675,696c-4,-4 -10,-6 -11,-12M690,664c4,4 10,0 13,4M735,532c-3,-4 -2,-10 -8,-12M799,670c1,9 -9,15 -6,25M632,389c1,2 0,4 0,5M678,482c-5,-1 -8,-4 -11,-8M622,425c2,-2 5,-1 7,-3M798,329c-7,3 -7,9 -8,15M632,351c-2,-1 -2,-2 -3,-4M581,349c-3,0 -3,-3 -6,-5M564,404c1,2 2,3 3,4M686,489c2,3 4,6 8,7M590,329c-1,-3 2,-7 -2,-9M1006,655c-5,-5 -3,-10 -2,-16M623,368c-2,0 -4,-1 -4,-4M637,420c-2,-1 -3,-5 -6,-4M820,323c0,-7 10,-11 8,-19M565,516c1,3 4,4 3,7M668,537c1,-3 3,-6 7,-6M979,504c4,6 2,12 -1,18M582,568c-1,-3 -3,-6 -7,-8M617,299c1,-3 -3,-6 -1,-9M688,214c-4,0 -6,3 -9,5M849,546c3,-5 10,-6 13,-11M777,402c-1,-4 3,-8 1,-13M773,211c4,-3 6,-7 7,-13M893,590c-8,-4 -13,-9 -14,-18M646,351c2,-1 4,-2 5,-5M648,392c3,0 5,0 7,2M923,570c6,-1 11,-5 17,-6M592,688c3,-1 6,-3 9,-3M606,694c3,1 5,-1 8,-2M845,344c-6,1 -13,0 -17,6M542,541c3,1 6,3 10,3M657,483c5,-1 8,6 13,5M558,439c-4,0 -5,5 -9,5M555,636c-4,1 -8,-3 -12,0M945,343c2,7 -1,13 -5,20M790,613c-1,5 -8,8 -6,15M617,426c-2,2 1,5 -2,7M515,570c-1,3 -4,3 -7,4M675,696c-4,3 -8,4 -12,1M676,468c-1,-4 -7,-2 -8,-7M624,272c3,-2 6,-1 8,-2M558,377c2,-1 3,-2 5,-3M756,253c-1,4 -7,7 -7,12M765,608c5,-2 8,2 13,2M769,381c-4,3 -6,7 -10,9M953,477c7,-1 14,4 20,-2M1008,564c-2,-9 6,-14 9,-20M631,416c-3,-1 -4,-5 -7,-5M568,533c-3,2 -6,4 -9,2M923,632c4,-3 7,-9 14,-8M630,319c-2,-2 -2,-5 -4,-7M522,530c-2,2 -3,5 -6,4M598,472c-4,0 -6,3 -9,5M668,675c0,5 7,6 5,11M642,314c0,-3 -3,-5 -3,-7M662,373c-2,3 -5,3 -9,3M766,525c-1,5 0,10 0,14M708,529c0,5 6,5 8,9M716,409c1,-6 -7,-7 -6,-13M849,297c-9,-3 -13,7 -21,7M602,419c0,-3 2,-4 3,-6M569,295c2,3 0,7 0,11M548,656c-2,-3 -3,-8 -8,-9M792,361c2,6 -5,11 -2,18M600,350c1,2 3,4 3,6M583,358c-2,-1 -3,2 -5,2M679,631c-3,-1 -6,-2 -7,-6M672,393c-1,3 3,6 1,10M598,407c-1,2 -3,2 -4,4M828,304c4,6 8,11 14,15M967,493c-5,2 -11,0 -16,4M644,501c-3,3 -3,7 -7,9M1013,598c-1,-6 -5,-11 -4,-17M940,698c10,7 21,-1 31,1M707,476c-3,4 -8,5 -11,10M590,620c4,0 5,3 8,4M649,336c2,-2 2,-5 5,-7M604,378c1,-2 4,-3 4,-6M655,292c-3,-3 -2,-9 -7,-10M513,498c3,-3 7,-2 11,-2M820,501c-8,-5 -7,-13 -8,-20M737,672c2,-6 7,-9 13,-11M531,487c-1,4 -3,8 -7,9M842,395c5,-2 6,-9 11,-10M731,257c3,3 2,8 4,11M663,395c3,-2 6,-1 9,-2M833,600c1,7 3,14 6,21M632,669c4,2 7,0 11,0M498,561c2,2 4,3 5,7M776,642c4,-4 2,-11 8,-14M699,275c3,-1 7,-2 9,-5M525,545c-2,2 -5,3 -5,6M574,323c2,-1 5,0 7,-2M639,569c2,4 8,4 10,9M966,642c3,-8 1,-17 8,-23M598,407c-3,1 -6,-1 -7,-4M616,260c-1,3 -6,1 -7,4M604,588c1,3 0,5 0,8M601,529c1,-3 -1,-6 -2,-8M671,573c4,2 7,3 11,3M675,259c-2,-4 0,-8 -2,-12M680,679c2,4 5,7 7,10M872,283c0,-7 -7,-12 -7,-20M602,299c-1,3 0,6 2,9M659,575c-3,-2 -3,-6 -3,-9M637,677c-3,2 -6,3 -9,4M695,381c-3,4 -8,2 -11,3M587,438c2,1 5,2 6,5M794,241c2,7 -4,15 0,22M543,613c3,-4 2,-8 0,-12M566,467c-2,-4 1,-8 -1,-12M833,600c-5,-5 -1,-12 -4,-18M497,534c0,-3 4,-6 4,-10M598,407c2,1 4,1 6,0M931,376c-1,7 -5,11 -11,13M635,601c4,-1 8,0 12,-4M655,585c-1,5 -4,9 -8,12M716,289c-1,-3 -6,-4 -6,-8M697,372c-3,1 -5,4 -9,3M647,483c-3,1 -5,2 -9,2M692,474c-1,5 6,7 4,12M584,400c3,-1 4,2 7,3M849,546c-1,9 5,14 8,22M763,638c5,-2 10,0 13,4M708,529c3,-1 7,-2 10,-5M925,340c-5,-2 -8,-8 -13,-10M549,699c4,-3 6,-7 4,-11M624,389c1,-3 3,-4 3,-7M735,610c-3,4 1,9 -2,12M587,438c-1,-3 -3,-6 -5,-9M653,433c0,-5 -8,-5 -8,-10M762,491c-4,-4 -8,-7 -12,-11M563,381c-1,3 -2,6 -5,7M578,370c2,-1 2,-5 6,-5M561,334c2,-2 5,-1 8,-3M810,345c-7,5 -13,2 -20,-1M624,360c2,0 3,-1 6,-1M583,300c2,-1 5,-3 7,-5M982,556c2,-5 2,-11 -2,-15M592,511c5,-1 9,-1 12,3M727,694c-7,-2 -11,2 -14,7M770,367c2,-4 7,-6 9,-11M522,530c2,4 6,4 10,7M764,668c3,3 5,7 6,10M579,392c2,2 6,1 8,3M719,212c-2,2 -5,4 -6,8M636,429c-1,-3 -1,-6 1,-9M676,436c5,0 6,-5 9,-7M579,392c-2,2 -1,4 0,6M566,318c-3,-1 -5,-2 -8,-1M583,300c2,2 -2,5 1,8M577,646c-2,-3 -4,-6 -8,-8M678,482c4,5 0,10 1,15M663,330c4,-2 1,-7 5,-10M643,669c-3,-2 -1,-7 -4,-9M708,529c-4,1 -6,-5 -9,-5M577,669c2,-3 4,-4 8,-5M698,317c2,-2 5,-5 8,-5M712,347c-1,3 -2,6 0,10M548,552c0,-3 1,-6 4,-8M628,442c3,-1 5,-3 6,-6M895,508c5,-2 9,-6 11,-11M542,557c2,3 4,5 8,5M564,414c-2,-1 -1,-4 -2,-5M856,497c0,-7 0,-14 -7,-19M771,559c6,-4 5,-10 6,-16M542,557c-2,3 -3,7 -7,10M997,625c0,8 -10,8 -12,14M565,516c-1,-3 -2,-6 -3,-10M654,386c-1,3 -2,6 1,8M590,279c-3,2 -2,7 -4,9M819,675c7,0 14,2 20,6M581,656c-3,1 -5,-1 -7,-2M885,405c2,-6 -3,-11 -3,-17M681,567c-2,4 -6,5 -10,6M817,436c-6,6 -13,5 -20,6M617,426c-3,0 -5,4 -8,4M612,311c-3,0 -6,-1 -8,-3M828,350c-3,6 -1,13 -5,19M693,443c-3,-1 -6,-1 -9,-2M874,239c-13,-2 -12,-18 -22,-23M828,452c8,-3 7,-11 11,-16M560,690c-3,2 -3,6 -3,10M694,596c-3,-4 -3,-9 -4,-15M819,675c-5,-8 -6,-15 -2,-24M713,262c-1,4 -5,5 -5,8M618,589c2,-2 6,-1 7,-4M663,330c-3,2 -4,4 -6,8M584,400c0,-2 1,-3 3,-5M646,351c-3,3 -6,6 -10,4M637,626c-1,3 0,5 1,8M829,698c7,-3 16,1 23,-6M584,400c-2,1 -4,-1 -5,-2M549,444c0,-4 -2,-9 2,-12M808,591c-4,6 -1,12 -1,17M750,584c5,2 1,10 7,13M602,649c3,1 6,4 10,3M811,272c8,-2 17,4 26,-3M750,637c-1,-7 4,-10 8,-15M618,568c3,0 5,-3 8,-3M673,413c4,2 6,5 6,9M639,375c-2,3 -5,3 -7,3M556,325c1,-2 3,-5 2,-8M611,362c1,2 1,3 2,5M722,391c1,-5 4,-8 9,-10M733,399c-1,5 5,7 6,12M484,525c2,2 3,5 5,7M924,313c4,7 11,8 18,9M651,531c0,5 4,6 7,9M655,394c1,2 1,5 4,7M558,439c2,-3 1,-6 1,-9M596,311c3,1 6,1 8,4M749,421c-5,-2 -8,-6 -10,-10M576,575c1,3 -1,5 -1,8M572,684c4,3 5,7 3,12M606,694c-3,-2 -6,-5 -5,-9M813,208c11,-8 24,-6 37,-11M961,409c7,3 12,-4 19,-4M578,370c-1,2 -1,3 0,6M729,204c-5,1 -6,7 -10,8M665,552c3,2 1,6 4,9M604,308c2,2 1,5 0,7M680,660c0,-4 -5,-5 -6,-8M904,649c8,1 16,3 24,-1M988,695c5,-5 8,-11 10,-17M941,509c-4,-5 -10,-3 -16,-5M680,679c0,4 -2,7 -7,7M600,498c3,0 6,-1 7,-4M668,675c4,-1 3,-6 5,-8M606,694c3,1 6,2 7,6M818,540c5,-5 10,-5 15,-2M775,229c4,7 9,13 19,12M553,688c-2,2 -5,1 -7,3M692,697c-6,2 -11,-5 -17,-1M958,566c5,1 12,0 16,5M560,367c1,3 4,3 8,3M722,391c1,-4 -4,-5 -4,-9M679,395c0,-4 6,-6 5,-11M644,208c4,1 7,3 8,7M708,367c0,-4 5,-6 4,-10M591,416c0,-3 -2,-5 -5,-6M604,514c-1,-5 1,-9 4,-12M669,428c3,-2 7,-3 10,-6M577,416c-2,0 -3,-2 -4,-2M746,390c2,5 8,7 8,13M958,566c-6,4 -12,-5 -18,-2M635,372c2,0 3,2 4,3M663,395c-2,2 -2,4 -4,6M712,347c1,-4 2,-7 0,-10M651,531c3,-1 6,-2 10,-2M609,393c0,-3 3,-4 3,-5M609,487c-3,-2 -6,-2 -9,-1M583,358c1,-1 4,-2 5,-4M923,570c-2,-7 1,-12 5,-17M653,369c-2,-1 -4,-3 -4,-6M677,321c-2,-3 -2,-7 -2,-10M656,233c-4,-2 -7,-4 -10,-9M601,395c-2,-1 -4,-3 -7,-4M707,229c5,-1 9,-7 16,-6M587,371c2,-2 1,-4 2,-6M707,426c-2,5 -7,4 -9,8M675,296c-2,-2 -6,-2 -8,-5M619,382c2,-1 -1,-4 1,-6M670,212c-4,-2 -7,-5 -12,-5M553,370c4,0 6,5 10,4M858,639c-4,6 -10,7 -17,9M828,421c2,6 4,12 11,15M627,462c0,-4 2,-7 6,-9M678,482c-1,-5 -1,-10 -2,-14M572,374c2,0 4,2 6,2M924,313c-6,-4 -12,-3 -19,-4M625,449c-1,-3 0,-5 3,-7M764,271c2,5 -2,9 0,14M706,660c1,4 5,5 8,6M799,631c-8,-3 -3,-13 -9,-18M718,382c-2,-3 -6,-3 -8,-5M701,248c-2,2 -5,4 -6,8M579,436c2,2 5,0 8,2M718,619c6,-3 11,-1 15,3M653,319c-3,2 -3,5 -6,7M637,586c2,-3 -2,-6 1,-8M941,509c5,-2 10,-5 10,-12M567,389c2,0 3,3 5,3M673,413c0,-3 0,-7 0,-10M631,530c-2,1 -3,4 -6,6M558,660c4,1 3,7 6,9M793,427c-4,-4 -8,-8 -14,-8M627,382c3,0 4,-2 5,-4M965,436c9,-3 19,-5 25,-16M575,504c2,1 5,0 7,2M613,609c-2,-3 -2,-7 -1,-11M720,576c1,5 9,3 11,7M739,411c-3,4 -7,6 -6,12M628,661c-1,3 -5,2 -7,3M730,441c2,-5 8,-6 11,-10M644,208c2,-3 1,-7 3,-10M658,601c-2,3 -1,7 -4,8M607,327c3,3 0,6 0,9M831,234c-2,-12 -16,-14 -18,-26M711,650c-4,-1 -8,-2 -12,1M579,436c-1,-3 3,-4 3,-7M618,589c4,2 5,6 7,9M579,392c1,-2 1,-4 1,-6M979,504c-6,-1 -9,-6 -12,-11M626,398c-1,2 -1,5 -5,7M538,528c-2,3 -3,7 -6,9M741,431c-4,-2 -5,-6 -8,-8M662,223c-4,-2 -7,-5 -10,-8M637,586c-3,1 -3,6 -6,6M864,673c-2,-6 -4,-11 1,-16M567,586c-3,-2 -8,-2 -10,-5M626,623c-2,4 -6,4 -10,5M577,410c-2,1 -3,3 -4,4M606,351c0,3 -3,3 -3,5M675,296c-4,5 4,9 0,15M678,482c4,0 7,3 8,7M645,377c3,-1 5,0 8,-1M670,212c1,-5 -2,-9 -3,-15M750,661c-6,-3 -5,-10 -9,-15M847,413c7,4 13,4 20,-2M581,381c1,2 3,4 4,6M657,502c-4,1 -9,-1 -13,-1M618,546c3,-3 6,-6 7,-10M770,248c-5,-3 -7,-7 -6,-13M713,636c-2,4 -3,9 -2,14M643,669c5,0 4,-7 9,-8M736,365c3,-3 1,-9 6,-13M672,643c3,-3 2,-9 7,-12M535,584c-4,-3 -8,-8 -12,-11M647,514c2,3 5,5 7,8M668,461c4,0 8,-2 13,-1M831,234c-1,-8 6,-16 2,-26M870,207c-8,-1 -13,-7 -20,-10M572,314c-3,-2 -2,-6 -3,-8M567,408c-2,1 -4,-1 -5,1M825,385c-5,2 -10,7 -17,3M745,238c7,3 13,0 19,-3M750,584c4,-3 2,-8 4,-11M669,519c-1,5 7,6 6,12M600,634c-3,2 -5,0 -8,-1M627,353c-1,2 -3,2 -6,3M603,441c0,-5 -7,-5 -6,-10M538,528c-3,-3 -6,-5 -10,-5M533,517c-1,-4 -5,-5 -8,-6M691,452c-1,4 -1,8 2,12M924,453c-5,6 -6,15 -14,20M839,621c-5,3 -11,5 -16,9M593,369c-2,-1 -3,-2 -4,-4M676,436c2,3 5,3 8,5M547,322c-1,5 1,10 1,14M801,509c-4,7 -3,15 -5,23M498,561c-6,2 -10,0 -15,-4M647,198c3,-1 6,-1 9,-1M891,343c-2,6 -9,11 -8,19M675,696c2,-6 6,-8 12,-7M723,223c-4,2 -1,8 -6,10M536,509c3,2 3,7 7,9M604,378c0,2 -2,4 -4,5M565,697c-2,2 -6,0 -8,3M736,494c-5,-3 -10,-2 -15,-3M798,329c8,1 14,-7 22,-6M567,278c3,1 6,0 9,-1M898,453c-4,4 -4,11 -8,16M680,679c0,-3 3,-6 2,-9M544,624c2,4 0,8 -1,12M535,567c3,0 5,1 8,0M638,291c-1,4 -6,3 -7,6M564,414c1,3 -2,5 -2,8M763,447c2,6 11,3 13,9M847,413c8,4 12,9 11,18M590,620c-4,1 -5,4 -5,8M719,430c1,3 -1,6 -1,9M597,269c-3,2 -6,-2 -10,-1M556,614c0,3 -4,4 -5,7M706,312c0,-5 -2,-10 -5,-13M644,250c1,-3 1,-7 -1,-10M904,649c-7,-2 -13,0 -20,1M682,367c2,3 2,7 6,8M811,272c-4,-5 -13,-2 -17,-9M602,299c3,1 6,2 10,5M697,266c-1,-3 -3,-6 -2,-10M915,614c3,-8 -7,-13 -4,-21M630,319c1,3 5,3 5,7M856,623c3,-6 -5,-9 -5,-15M849,546c3,-7 -3,-13 -3,-20M558,660c1,-4 -3,-7 -1,-10M923,570c-5,7 -15,1 -21,7M655,585c-4,-1 -6,-3 -6,-7M886,438c8,-2 16,-3 22,-9M734,561c-6,-4 -1,-12 -6,-16M940,564c-6,-2 -9,-6 -12,-11M1011,528c-6,2 -12,-4 -17,1M743,688c5,0 4,8 10,8M727,520c-4,-1 -7,2 -9,4M542,497c2,-4 -4,-6 -2,-11M588,431c-2,-1 -4,-2 -6,-2M641,558c-1,-3 -5,-3 -6,-6M515,570c-2,-3 2,-7 -1,-9M592,348c2,2 2,5 5,6M760,416c-3,4 -7,4 -11,5M531,487c5,-1 10,-2 16,-2M607,636c2,3 4,6 7,9M708,386c-3,-4 -9,0 -13,-5M621,239c-1,2 -6,2 -7,6M862,518c-7,0 -11,5 -16,8M700,606c-3,1 -5,4 -6,7M556,340c2,-2 2,-5 5,-6M544,624c3,0 4,-3 7,-3M740,224c3,-4 2,-8 3,-13M596,536c-3,0 -5,-4 -8,-5M573,595c3,2 3,6 5,9M619,558c4,2 7,-1 11,0M602,419c-1,-2 -1,-4 -4,-5M730,301c5,-2 6,-7 7,-12M619,416c-2,2 -4,3 -5,5M659,446c2,-3 5,-5 7,-8M683,520c3,-4 8,-3 11,-7M657,673c-4,-3 -6,-7 -5,-12M718,382c4,0 9,0 13,-1M705,687c2,4 0,8 -2,12M658,207c-2,3 -6,4 -6,8M759,390c6,1 12,-5 19,-1M616,279c-2,-2 -5,-4 -7,-7M647,326c-3,1 -5,3 -6,6M620,634c-3,-1 -2,-5 -4,-6M515,515c-3,1 -6,1 -9,1M613,353c-1,2 -2,3 -5,3M845,344c3,-4 7,-8 11,-13M661,409c2,3 1,6 0,9M612,311c-1,-2 -1,-5 0,-7M652,402c3,1 4,-2 7,-1M707,229c-3,2 -6,4 -5,8M607,366c2,2 4,2 6,1M543,601c-3,0 -4,4 -7,4M580,340c3,0 5,2 6,4M984,436c2,5 2,11 1,16M570,436c-3,2 -3,5 -2,8M716,538c3,4 7,7 12,7M957,363c-5,10 -13,16 -26,13M631,488c2,-3 -2,-7 1,-10M765,608c-5,-2 -7,-6 -8,-11M572,314c-5,-2 -9,3 -14,3M715,562c-1,3 -1,7 -4,10M759,344c-3,3 -4,7 -5,11M793,695c6,-5 13,0 19,-1M612,337c-2,-1 -3,0 -5,-1M651,346c4,2 7,1 10,-2M600,486c-3,4 1,8 0,12M623,614c3,-1 6,-4 9,-4M612,598c2,3 5,3 7,4M623,432c-2,-2 -1,-5 -1,-7M910,549c6,-2 12,0 18,4M631,297c2,3 4,8 8,10M673,413c-1,-3 -3,-4 -5,-5M634,543c0,3 2,5 1,9M689,240c-2,4 -3,9 -6,13M764,285c-1,4 -4,8 -5,12M705,491c-2,4 0,7 2,9M625,449c3,0 5,3 8,4M798,219c5,-4 12,-4 15,-11M639,569c-5,1 -7,-6 -13,-4M493,520c1,5 -5,8 -4,12M989,571c-5,0 -10,-2 -15,0M670,374c-1,-3 2,-5 3,-8M687,324c-4,2 -4,6 -5,9M933,534c-5,5 -2,13 -5,19M743,199c3,4 0,8 0,12M661,660c-2,4 -4,8 -4,13M899,562c-4,-4 -6,-10 -7,-16M613,353c1,2 2,3 4,5M964,545c5,-2 11,1 16,-4M625,286c-2,4 -6,1 -9,4M619,400c-3,0 -4,-1 -6,-3M650,411c1,-3 2,-5 2,-9M656,309c3,1 6,0 9,2M736,494c2,5 4,8 8,11M698,642c-3,1 -7,0 -11,3M716,289c6,-1 7,-8 12,-10M723,466c-7,-1 -6,-10 -13,-11M666,362c-3,-3 -6,-3 -9,-5M570,611c-4,-1 -3,-6 -5,-8M565,516c-2,2 -6,3 -6,7M758,431c6,4 4,10 5,16M556,614c-4,-2 -8,-4 -13,-1M663,616c-3,5 -3,10 -2,15M711,250c-3,-3 -2,-6 -1,-10M637,626c-4,-1 -6,4 -10,4M758,431c4,-5 5,-10 2,-15M582,680c-3,3 -6,2 -10,4M882,673c-6,2 -12,5 -18,0M663,243c-3,2 1,7 -3,9M569,331c-1,4 -1,8 0,13M683,253c4,2 9,2 12,3M698,505c-1,-3 -2,-7 -4,-9M593,369c2,-2 1,-5 4,-7M730,301c3,6 -6,9 -4,15M1007,473c1,-8 2,-16 -5,-22M630,558c2,-1 4,-4 5,-6M524,496c0,4 5,4 5,8M619,416c2,1 4,2 5,3M638,230c1,4 5,6 5,10M763,447c0,-7 6,-11 12,-13M648,492c5,-1 6,-6 9,-9M492,540c-1,-3 -2,-5 -3,-8M607,419c0,2 2,3 2,5M849,242c0,-9 7,-17 3,-26M758,431c-5,-2 -6,-7 -9,-10M790,479c2,5 10,7 9,14M614,421c-2,0 -3,2 -5,3M555,514c0,4 3,6 4,9M615,450c1,-3 2,-6 5,-7M940,564c2,5 8,9 6,16M575,550c2,-3 -1,-5 -1,-8M548,656c3,-1 5,-6 9,-6M829,474c6,6 15,-3 20,4M884,624c7,0 7,-9 13,-10M974,420c4,-4 6,-9 6,-15M643,523c-2,2 0,6 -3,8M506,504c5,2 4,9 9,11M874,342c3,7 8,12 9,20M698,642c1,-4 5,-7 5,-12M842,395c-7,-3 -12,6 -20,5M619,382c3,0 5,-2 8,0M651,555c2,3 4,7 5,11M581,349c0,2 -1,4 -4,6M962,659c-5,4 -11,1 -17,3M632,389c3,0 5,1 6,4M659,575c-4,0 -7,0 -10,3M723,348c4,-2 8,-6 14,-7M842,319c-7,2 -6,10 -10,15M669,386c0,3 2,5 3,7M610,567c3,1 6,2 8,1M664,684c-4,4 3,9 -1,13M688,214c2,3 7,3 8,7M857,568c-5,4 -7,8 -11,14M649,336c1,3 1,7 2,10M687,324c2,4 5,5 8,6M567,278c5,5 -1,11 2,17M669,386c1,-2 4,-3 5,-6M687,504c1,-3 4,-6 7,-8M706,549c-4,0 -5,3 -7,6M662,381c1,2 -2,4 0,7M724,668c-3,3 -4,7 -6,12M609,684c1,3 1,7 5,8M618,673c-4,-2 -3,-7 -6,-9M937,624c3,-7 10,-6 15,-9M667,197c5,2 9,-4 14,0M845,462c-1,6 0,11 4,16M592,348c-2,-2 -4,-3 -6,-4M565,516c3,0 6,-1 10,-3M600,458c3,-2 3,-6 4,-10M530,555c1,-5 -4,-6 -5,-10M697,372c0,-6 -7,-6 -8,-11M542,541c-3,-1 -7,-1 -10,-4M644,250c4,0 4,-5 8,-6M931,376c-3,-6 -8,-8 -14,-7M560,367c2,2 3,4 3,7M553,501c2,3 6,3 9,5M724,368c-5,2 -10,-1 -16,-1M595,383c2,-3 0,-5 -1,-8M990,474c-6,-4 -11,3 -17,1M575,550c-2,2 -6,2 -7,6M677,350c-4,2 -7,-1 -12,0M654,691c-1,-5 -6,-8 -7,-13M688,310c-4,-3 -9,-2 -13,1M632,610c3,0 4,4 8,4M503,568c-2,-4 -1,-7 2,-10M667,279c-3,0 -6,2 -9,3M494,555c-3,1 -7,-1 -11,2M917,369c-1,-6 -1,-12 -7,-16M686,602c0,5 8,5 8,11M880,689c-1,-5 -2,-11 2,-16M635,255c-1,-3 0,-6 2,-10M567,631c3,2 4,4 2,7M532,537c-1,3 -4,6 -7,8M876,424c-6,-2 -6,-9 -9,-13M545,436c1,-3 3,-4 6,-4M598,624c0,-3 -1,-5 0,-8M714,587c-4,1 -6,6 -11,4M643,462c-3,-3 -5,-7 -10,-9M597,362c-3,0 -6,0 -8,3M720,418c5,0 8,6 13,5M626,312c-2,-2 -4,-3 -7,-5M565,455c2,3 5,1 7,3M639,493c4,1 2,6 5,8M654,386c-1,3 -5,4 -6,6M1002,451c-5,3 -11,1 -17,1M856,497c-6,-1 -14,2 -20,-4M630,558c3,2 7,-2 11,0M633,641c1,4 6,4 7,7M667,498c1,-3 2,-7 3,-10M547,682c0,3 -1,5 -1,9M679,422c3,-4 9,-4 10,-10M518,609c5,-5 12,-3 18,-4M831,234c-7,4 -16,6 -17,16M931,376c2,-5 4,-10 9,-13M631,530c3,-2 6,2 9,1M1013,598c-6,-7 -13,-9 -21,-6M604,596c3,0 5,-1 8,2M661,409c1,-3 -2,-5 -2,-8M574,542c1,-3 3,-4 5,-5M554,679c3,0 5,2 7,3M614,345c2,2 2,5 5,6M749,287c2,5 6,7 10,10M653,433c-2,1 -5,-1 -7,1M624,647c-4,1 -6,-4 -10,-2M612,664c3,-2 6,-2 9,0M764,271c5,1 9,4 14,5M893,590c-5,-1 -11,-5 -17,-1M618,546c3,1 6,1 9,1M654,458c-3,4 -8,2 -11,4M959,460c4,6 10,9 14,15M988,695c5,5 11,-2 15,2M653,273c1,4 -4,6 -5,9M577,636c-2,2 -6,0 -8,2M667,279c-1,4 -2,8 0,12M633,654c3,-1 5,-4 7,-6M571,661c-3,-1 -5,-2 -7,-5M564,404c0,2 -3,3 -2,5M727,694c0,-6 -3,-11 -9,-14M780,445c-1,-4 -6,-6 -5,-11M715,562c6,3 6,8 5,14M961,409c-2,-9 4,-14 10,-19M651,418c-3,1 -3,4 -6,5M781,672c1,-5 -2,-8 -2,-12M917,526c3,6 9,7 16,8M592,688c-3,2 -8,1 -10,4M616,260c-1,-4 -6,-3 -7,-6M747,308c-5,-3 -12,-4 -17,-7M876,424c-7,0 -13,1 -18,7M798,219c-5,-8 -11,-14 -18,-21M643,523c3,-2 7,-3 11,-1M635,255c-1,2 -1,5 -1,7M750,465c-2,-6 1,-13 -6,-17M605,413c1,2 0,4 2,6M687,324c-4,0 -7,1 -10,-3M743,688c-4,4 2,9 -2,13M985,639c6,2 13,-4 19,0M949,423c7,-2 8,-9 12,-14M824,518c1,8 8,13 9,20M828,350c5,-5 3,-11 4,-16M749,287c5,0 10,-1 15,-2M592,612c-2,-2 -5,-3 -8,-4M566,467c0,-4 4,-6 6,-9M590,279c3,-3 7,-5 7,-10M959,460c-7,1 -10,-7 -17,-6M688,310c0,-4 -1,-8 -4,-12M858,448c-7,2 -10,7 -13,14M935,439c2,-7 12,-8 14,-16M617,390c2,1 3,3 5,5M558,568c-3,-1 -5,-5 -8,-6M553,501c-5,1 -8,-2 -11,-4M558,388c1,-1 3,-2 4,-2M531,487c-1,3 1,6 2,8M925,586c-3,6 -10,4 -14,7M555,599c-3,1 -3,5 -5,6M617,299c-2,1 -3,4 -5,5M582,680c1,-4 4,-5 6,-8M691,452c-3,2 -5,7 -10,8M867,375c-6,-3 -8,-10 -12,-15M580,340c-2,1 -4,3 -5,4M774,344c-5,-3 -6,-9 -8,-14M722,267c-1,-4 -7,-2 -9,-5M597,269c1,2 2,5 5,6M555,636c-4,1 -4,4 -6,7M753,696c1,-6 5,-12 1,-19M857,594c-4,-4 -4,-11 -11,-12M775,229c1,-6 -6,-11 -2,-18M533,517c-3,1 -4,3 -5,6M925,340c1,-10 12,-11 17,-18M765,608c-1,6 -2,11 -7,14M577,646c-1,3 -3,5 -3,8M788,550c7,2 15,4 22,4M870,207c6,10 6,21 4,32M603,661c3,2 6,1 9,3M596,536c1,3 1,5 4,6M545,436c2,3 1,7 4,8M628,661c3,-3 7,-3 11,-1M904,649c0,-6 -8,-9 -5,-16M492,540c-4,1 -8,-2 -11,1M661,409c-6,0 -4,8 -10,9M654,691c-5,0 -10,-3 -14,-6M708,367c-5,0 -6,-7 -10,-7M971,699c11,2 21,-5 32,-2M884,624c-5,3 -4,11 -10,12M575,583c3,0 4,4 8,3M640,215c0,3 -1,6 -5,7M923,570c0,6 2,11 2,16M638,634c-3,-4 -7,-3 -11,-4M718,382c-3,2 -7,2 -10,4M810,452c-6,3 -12,5 -14,12M721,491c-1,3 -3,6 -4,8M795,653c-6,0 -9,7 -16,7M703,214c1,-4 3,-7 3,-11M605,385c-1,-2 1,-5 -1,-7M677,350c5,0 9,-6 15,-4M587,395c3,-1 5,-3 7,-4M586,555c-3,3 -6,6 -11,5M633,654c-1,2 -4,4 -5,7M693,464c-4,-1 -7,-4 -12,-4M615,499c-2,-3 -6,-2 -8,-5M648,282c-4,1 -9,0 -13,-2M736,494c5,2 9,2 14,-1M764,317c4,2 9,3 13,0M678,482c-1,3 -5,3 -8,6M570,436c-1,-2 -3,-4 -2,-7M874,342c-5,-6 -10,-10 -18,-11M862,518c-3,6 3,11 0,17M677,321c-2,2 -1,6 -4,8M980,405c5,4 5,11 10,15M544,624c0,3 5,3 6,6M568,370c2,-1 4,-1 5,-2M628,681c-1,3 0,6 -3,9M597,580c2,-3 8,-1 9,-5M771,559c2,3 7,5 7,9M735,532c0,-5 4,-8 6,-13M584,576c-3,0 -5,-1 -8,-1M575,560c-3,1 -6,2 -8,4M631,305c0,-3 1,-5 0,-8M767,590c-1,-4 2,-8 -1,-13M560,367c-3,-1 -4,-4 -5,-7M573,402c0,2 -1,4 0,5M739,573c-5,1 -8,5 -8,10M676,556c3,3 4,7 5,11M692,697c4,-3 7,-8 13,-10M967,590c9,-6 16,8 25,2M560,643c3,0 6,1 8,3M681,567c3,-3 3,-8 6,-11M615,433c-1,-3 -5,-1 -6,-3M756,648c0,-5 -2,-9 -6,-11M906,666c6,1 8,6 12,10M560,589c0,-3 0,-6 -3,-8M810,452c-1,-6 1,-12 7,-16M558,568c-3,1 -7,2 -8,6M609,684c-2,2 -6,-1 -8,1M651,531c2,-3 1,-6 3,-9M750,661c-1,-6 4,-8 6,-13M905,309c1,-8 6,-13 14,-16M569,331c3,-1 5,2 8,3M659,575c1,4 -3,7 -4,10M825,385c-5,4 0,10 -3,15M509,551c-1,5 4,6 5,10M735,610c-2,-4 -4,-9 -2,-14M555,381c0,-2 3,-2 3,-4M858,448c-6,-4 -13,-7 -19,-12M734,561c0,5 0,9 5,12M585,664c-3,-1 -3,-5 -4,-8M663,330c3,1 7,1 10,-1M612,410c-3,0 -5,1 -7,3M818,540c-2,5 -5,9 -8,14M753,520c-3,4 -3,9 -4,14M503,568c3,1 2,5 5,6M706,549c-5,-1 -9,-4 -11,-10M562,422c-2,3 -3,5 -3,8M698,409c5,0 4,7 8,8M497,534c3,-1 7,1 10,-3M891,251c-9,3 -18,5 -26,12M702,461c3,-2 5,-4 8,-6M593,369c-2,0 -4,2 -6,2M630,319c-3,2 -8,0 -11,4M535,567c-3,5 -9,2 -12,6M791,397c5,-3 11,-6 17,-9M711,250c3,-4 6,-8 12,-9M494,555c3,1 4,3 4,6M677,321c3,3 1,9 5,12M567,586c3,2 4,6 6,9M540,576c2,-3 2,-6 3,-9M614,372c-2,0 -4,1 -6,0M673,582c-3,-2 -2,-6 -2,-9M624,262c0,-3 0,-6 3,-8M577,304c-3,-1 -5,3 -8,2M697,266c-5,0 -10,0 -13,4M592,688c1,4 1,8 5,11M833,208c8,0 9,-10 17,-11M769,381c-3,-5 1,-10 1,-14M595,383c-2,0 -4,0 -6,0M609,393c-2,-1 -3,-3 -6,-3M506,540c3,-3 0,-6 1,-9M607,636c-3,0 -5,-3 -7,-2M770,621c-4,0 -8,2 -12,1M808,362c-3,-6 5,-11 2,-17M614,345c-2,1 -3,0 -5,-2M668,537c-4,-1 -7,-1 -10,3M627,382c2,1 4,2 6,1M602,419c-2,1 -4,2 -5,4M947,548c-2,6 -4,11 -7,16M515,515c1,-3 0,-6 0,-9M880,453c-5,2 -10,5 -14,9M714,692c3,-3 1,-9 4,-12M669,519c0,-4 -1,-8 -2,-12M812,415c5,-4 9,-8 10,-15M597,431c-3,-2 -6,-1 -9,0M663,616c3,3 4,7 9,9M702,350c-1,3 -3,6 -4,10M979,504c4,-4 10,-5 13,-11M601,395c1,2 2,3 3,4M928,648c6,5 11,10 17,14M965,436c6,3 12,-2 19,0M689,636c5,-3 2,-10 8,-12M641,439c1,-3 2,-5 5,-5M647,514c-2,-3 -6,-2 -10,-4M537,596c-3,-4 -3,-8 -2,-12M581,349c2,2 6,1 7,5M661,418c1,4 -1,7 -1,11M662,373c3,0 5,3 8,1M603,441c3,1 5,-2 8,0M660,252c0,4 -4,6 -4,10M666,362c2,-4 2,-8 -1,-12M655,292c1,-4 0,-8 3,-10M560,690c-2,-3 -5,-1 -7,-2M643,360c-3,-1 -6,-2 -7,-5M575,696c-3,1 -7,-1 -10,1M910,549c-6,3 -11,-6 -18,-3M836,493c-1,6 4,11 5,16M779,660c-3,-4 -6,-7 -11,-8M648,446c-3,0 -6,2 -9,2M697,372c5,0 7,-4 11,-5M609,284c-2,2 -6,4 -8,7M538,528c3,0 6,-3 10,-2M906,666c-7,6 -11,14 -8,24M621,655c-5,-2 -5,-7 -7,-10M615,433c-3,2 -3,5 -4,8M710,518c1,-3 5,-3 6,-6M740,224c4,4 7,8 5,14M514,589c-2,-5 -7,-9 -6,-15M684,206c-3,-2 0,-7 -3,-9M774,344c-1,5 4,8 5,12M734,561c5,-3 11,2 17,-1M632,210c-2,5 1,8 3,12M773,474c1,5 2,9 5,12M668,320c3,-2 6,0 9,1M723,241c-4,-1 -4,-6 -6,-8M690,581c-2,-2 -5,-5 -8,-5M547,322c3,-4 8,-1 11,-5M750,584c-1,-6 -10,-5 -11,-11M673,236c1,-3 -3,-5 -2,-9M600,350c2,-1 3,-3 4,-5M621,405c2,2 2,4 3,6M684,616c2,-3 6,-3 10,-3M935,439c6,4 1,12 7,15M592,688c1,4 -4,6 -3,10M564,414c2,1 2,3 5,4M906,276c-9,-6 -12,-15 -15,-25M624,419c2,0 3,2 5,3M598,472c3,-2 6,-2 8,-5M632,270c-1,4 4,6 3,10M1006,655c-6,3 -13,0 -17,7M766,354c4,1 8,5 13,2M974,619c7,-1 6,-9 12,-11M692,474c5,-2 10,2 15,2M616,279c-1,3 -5,2 -7,5M621,239c-1,-3 0,-5 -1,-7M582,692c-2,1 -3,4 -7,4M584,546c-3,2 -7,1 -9,4M609,296c3,-2 3,-6 7,-6M573,368c0,-3 1,-6 5,-8M645,369c-3,0 -6,-1 -8,-2M542,664c-1,4 1,8 1,12M708,386c2,-3 1,-6 2,-9M596,465c0,-4 -3,-5 -5,-8M583,519c3,0 5,3 7,4M627,254c-3,0 -6,-1 -8,-2M489,532c-2,4 -6,6 -8,9M522,530c1,-3 4,-4 6,-7M990,474c-7,-6 -2,-14 -5,-22M747,308c1,4 3,8 2,13M543,567c3,-1 5,-2 7,-5M592,425c-2,0 -3,-4 -5,-4M611,321c3,-1 5,2 8,2M612,304c3,0 4,3 7,3M849,546c-6,-1 -10,-6 -16,-8M764,285c7,0 9,-6 14,-9M586,451c-2,2 -1,5 -3,7M779,330c-3,4 -2,9 -5,14M829,582c-6,-3 -2,-11 -9,-13M957,363c-5,5 -1,14 -8,19M630,572c2,3 6,3 8,6M587,371c-2,-1 -2,-5 -3,-6M716,538c-3,-5 0,-9 2,-14M949,382c-1,-8 -9,-12 -9,-19M650,652c-2,4 -5,7 -11,8M609,545c-3,-3 -6,-3 -9,-3M905,309c9,-11 -3,-22 1,-33M545,436c4,-2 10,-2 14,-6M509,551c-2,2 -4,4 -4,7M937,395c6,-3 9,-8 12,-13M910,473c-5,-7 -12,-6 -20,-4M605,385c3,0 5,-2 8,-3M598,624c2,4 6,1 9,4M858,431c-6,1 -12,5 -19,5M857,568c5,-7 17,-3 20,-12M729,204c-6,2 -10,0 -14,-5M776,642c0,6 5,11 3,18M712,347c-3,1 -6,3 -10,3M643,523c-3,-2 -6,-4 -9,-5M755,218c-5,1 -7,-5 -12,-7M625,699c-2,-4 -8,-3 -11,-7M877,556c3,-7 11,-5 15,-10M578,485c0,5 -2,9 -6,12M998,678c-1,-9 10,-13 8,-23M577,334c-2,3 0,7 -2,10M628,509c-2,3 -5,5 -9,4M568,370c-2,0 -4,1 -5,4M604,514c0,3 3,6 3,10M568,444c-2,-3 -5,-6 -10,-5M767,590c4,1 8,1 12,2M637,586c3,-5 9,-3 12,-8M533,495c1,-4 4,-6 7,-9M918,487c-4,4 -6,9 -12,10M705,491c-3,-1 -7,-1 -9,-5M657,502c3,1 6,4 10,5M624,262c3,3 7,2 10,0M682,232c-3,-4 -7,-4 -11,-5M530,555c5,1 5,-6 10,-6M518,609c2,-4 2,-9 -1,-13M549,536c2,3 0,6 3,8M629,374c-3,-1 -5,-3 -6,-6M910,473c4,4 3,10 8,14M525,545c-3,-1 -6,0 -8,-3M609,284c3,1 5,3 7,6M583,519c-1,-4 -5,-5 -8,-6M810,554c-7,6 -4,14 -4,21M611,321c1,-3 6,-2 7,-5M626,329c3,-1 7,-1 9,-3M542,557c2,3 -1,6 1,10M689,361c3,-1 6,1 9,-1M626,623c-2,4 -5,6 -6,11M724,368c2,4 2,10 7,13M632,669c-1,4 3,6 5,8M645,423c-1,4 -2,7 1,11M703,630c0,-4 3,-6 7,-7M625,598c-3,1 -5,1 -6,4M947,548c6,-1 11,-4 17,-3M811,272c-2,-8 4,-14 3,-22M711,250c-6,-1 -11,2 -16,6M687,534c-4,1 -5,4 -5,8M681,408c-4,0 -9,-3 -13,0M640,472c-2,-2 -3,-5 -5,-6M618,408c0,-2 2,-3 3,-3M618,316c-1,-3 -3,-4 -6,-5M592,612c4,0 7,-2 9,-5M561,622c0,4 5,5 6,9M651,555c-4,1 -8,-1 -10,3M630,242c2,2 5,1 7,3M577,476c-2,-6 -9,-4 -11,-9M626,623c1,-3 -2,-5 -3,-9M893,486c-8,-1 -14,-6 -21,-9M656,309c2,-3 6,-6 8,-8M577,636c3,-2 4,-6 8,-8M886,438c-3,5 -4,10 -6,15M616,481c3,1 4,4 7,6M706,660c4,-2 1,-8 5,-10M676,468c0,-3 1,-6 5,-8M623,432c1,4 -2,7 -3,11M869,319c-2,-8 5,-12 7,-17M599,283c2,-2 1,-6 3,-8M731,381c4,0 7,-6 12,-4M764,197c5,4 10,4 16,1M648,492c1,-3 1,-7 -1,-9M1007,491c-5,3 -11,0 -15,2M601,338c-1,-3 -4,-3 -4,-6M642,397c-1,-2 -2,-3 -4,-4M606,694c-2,4 -7,2 -9,5M589,383c-1,-2 -1,-4 -1,-6M543,636c0,4 -3,7 -3,11M791,397c-3,-5 -9,-4 -13,-8M622,495c4,1 6,3 9,6M631,530c-1,-5 3,-8 3,-12M720,418c-5,2 -9,3 -14,-1M886,528c4,-4 11,1 15,-5M908,429c-6,-4 -7,-10 -7,-17M667,279c2,-3 5,-6 6,-10M923,415c-7,1 -14,-3 -22,-3M577,669c-2,-3 -5,-4 -6,-8M609,254c0,-3 -3,-6 -3,-10M509,551c1,-4 -3,-7 -3,-11M679,497c3,-3 5,-6 7,-8M595,398c1,-2 4,-2 6,-3M619,602c0,4 4,8 4,12M565,395c-1,2 -3,3 -5,5M561,622c-3,0 -7,0 -10,-1M577,410c-1,-1 -3,-2 -4,-3M675,296c-4,0 -7,2 -11,5M626,623c-1,3 1,5 1,7M664,268c0,4 4,6 3,11M622,425c2,-2 3,-3 2,-6M602,649c-1,-3 -2,-5 -4,-7M693,201c4,1 9,2 13,2M660,252c5,-1 8,-5 13,-5M779,528c3,5 3,10 -2,15M617,426c-1,-2 -3,-3 -3,-5M639,375c0,4 2,6 5,8M643,545c-3,4 1,9 -2,13M591,642c3,-3 4,-7 9,-8M719,457c4,0 9,-2 13,1M643,545c-3,-1 -6,-3 -9,-2M632,378c2,1 4,3 6,4M895,508c2,5 2,11 6,15M982,556c-1,6 -8,8 -8,15M697,372c5,-1 8,4 13,5M631,617c-1,-3 1,-5 1,-7M553,370c1,3 4,4 5,7M754,355c4,-2 8,-4 12,-1M563,381c-1,-2 -1,-5 0,-7M533,495c-3,-2 -6,1 -9,1M593,339c0,-3 2,-4 4,-7M679,594c-5,3 -9,-4 -14,-3M893,486c5,3 8,8 13,11M604,429c2,-1 3,1 5,1M1007,473c-6,4 -12,-3 -17,1M708,386c-3,3 -4,8 -9,10M626,329c-1,2 -4,2 -6,4M679,497c-4,-1 -8,4 -12,1M757,508c2,-6 3,-12 5,-17M647,597c0,5 2,9 7,12M845,344c-4,-4 -10,-4 -13,-10M506,540c-1,4 -6,3 -7,7M756,546c-5,0 -9,3 -14,0M852,692c4,3 11,1 14,6M630,359c-2,-1 -3,-3 -3,-6M548,336c-1,-2 -2,-5 -1,-7M591,416c-2,-1 -4,-2 -6,-1M690,283c3,2 5,4 6,7M591,542c2,-4 -4,-7 -3,-11M625,585c3,-4 0,-9 5,-13M708,614c-3,-2 -5,-5 -8,-8M658,643c3,1 4,5 6,7M628,509c3,3 6,1 9,1M886,528c-2,7 6,11 6,18M833,600c5,-6 14,-8 13,-18M615,576c-3,1 -6,-1 -9,-1M614,345c2,0 3,1 5,0M667,197c-2,4 -6,6 -9,10M674,339c-2,-3 0,-6 -1,-10M825,385c2,-5 2,-11 -2,-16M626,329c2,4 5,4 9,6M556,340c-2,-2 -4,-4 -8,-4M646,300c-5,-1 -7,-4 -8,-9M682,367c-2,-3 -5,-5 -5,-8M636,429c0,3 0,6 -2,7M606,351c-2,1 -4,0 -6,-1M650,652c3,3 3,6 2,9M636,402c-2,1 -4,0 -5,-1M808,362c3,6 12,1 15,7M710,240c4,-1 6,-3 7,-7M591,542c3,-1 4,-4 5,-6M621,655c2,-2 2,-5 3,-8M779,528c-7,0 -8,8 -13,11M779,592c1,6 -4,11 -1,18M573,407c0,2 -1,4 0,7M577,476c0,3 0,6 1,9M555,381c3,1 4,3 7,5M641,332c-2,2 -5,0 -6,3M764,271c6,-1 9,-6 11,-11M723,466c-2,3 -5,4 -8,4M910,473c7,-2 14,0 21,-3M602,299c3,0 5,0 7,-3M716,538c-1,5 3,10 1,15M564,404c-3,2 -6,2 -8,-1M543,613c-1,-4 -4,-6 -7,-8M603,661c-1,3 -3,6 -7,7M663,243c-4,0 -7,3 -11,1M673,582c0,5 5,8 6,12M572,684c-1,-3 -4,-4 -5,-8M775,260c4,5 -2,11 3,16M632,478c-3,2 -5,-1 -8,0M530,555c-3,-3 -8,-1 -10,-4M628,442c-3,2 -5,-1 -8,1M988,695c-7,-3 -10,6 -17,4M676,279c-3,-3 -7,2 -9,0M741,519c0,-5 4,-9 3,-14M730,441c0,6 3,11 2,17M643,360c-2,2 -3,1 -6,2M543,518c3,-2 7,-3 12,-4M710,518c2,4 4,6 8,6M633,654c3,0 3,5 6,6M632,389c-3,-2 -5,1 -8,0M808,388c8,0 8,10 14,12M905,309c4,6 6,14 7,21M688,214c-2,-2 -5,-4 -4,-8M690,398c-3,-3 -7,-2 -11,-3M515,581c2,-3 7,-3 8,-8M675,296c3,0 6,2 9,2M958,685c7,-2 13,-5 17,-12M581,422c-2,-1 -4,-1 -6,1M797,197c3,7 13,3 16,11M588,354c0,2 1,4 2,5M746,618c3,3 7,4 12,4M635,552c-3,-1 -6,-3 -8,-5M663,395c-2,-2 0,-5 -1,-7M791,397c-5,0 -8,7 -14,5M586,344c3,-1 4,-5 7,-5M812,481c-2,6 -10,6 -13,12M592,511c-2,-4 -7,-1 -10,-5M681,408c2,3 6,3 8,4M559,430c3,1 5,-3 9,-1M711,446c2,3 -1,6 -1,9M484,525c2,-4 6,-4 9,-5M636,402c-1,2 0,5 0,7M764,668c7,1 10,-5 15,-8M625,699c-4,-1 -8,3 -12,1M609,272c2,-3 0,-6 0,-8M639,375c3,-1 5,-3 6,-6M872,477c-7,6 -15,1 -23,1M654,386c3,-1 5,2 8,2M674,380c-3,-1 -2,-4 -4,-6M910,549c-6,2 -5,10 -11,13M692,346c3,2 7,2 10,4M617,463c4,1 7,2 10,-1M583,519c2,-4 -2,-8 -1,-13M589,654c1,-4 4,-7 2,-12M884,650c0,-10 6,-14 15,-17M710,518c-2,5 -8,2 -11,6M577,476c4,0 7,1 12,1M650,411c0,2 -1,5 1,7M650,411c-3,1 -6,1 -9,-1M632,695c2,1 6,0 7,3M982,556c5,4 9,8 7,15M588,531c1,-3 0,-5 2,-8M584,546c-3,-3 -8,0 -10,-4M620,443c-3,0 -6,-3 -9,-2M607,636c-1,-3 -2,-5 0,-8M593,369c3,-1 5,3 8,1M711,446c-3,0 -6,-1 -9,2M978,522c7,-1 12,0 16,7M764,668c4,-4 2,-10 4,-16M558,660c-6,-2 -11,-1 -16,4M811,272c-5,9 -4,21 -13,28M719,457c-4,1 -6,-3 -9,-2M620,634c2,-1 5,0 7,-4M1006,655c-7,-6 -14,-11 -21,-16M788,550c-4,-2 -8,-2 -11,-7M695,674c-2,-3 -6,-5 -5,-10M874,239c3,7 12,5 17,12M997,625c-3,-6 -10,-9 -11,-17M699,524c-4,-2 -4,-7 -5,-11M689,636c-4,-1 -6,-6 -10,-5M592,612c1,3 3,4 6,4M997,625c0,6 4,10 7,14M698,505c3,-2 5,-5 9,-5M543,601c3,-1 4,4 7,4M483,557c-1,-3 -3,-5 -4,-7M597,269c3,-2 3,-5 5,-8M555,487c-5,0 -10,-1 -15,-1M653,433c1,2 2,5 0,7M759,344c2,3 4,7 7,10M676,279c1,-4 -3,-7 -3,-10M630,364c-1,-2 1,-4 0,-5M779,592c5,-5 8,-11 10,-17M600,552c2,-3 0,-7 0,-10M571,351c3,-1 4,-4 4,-7M547,588c-2,5 -6,5 -10,8M557,581c-2,-2 -5,-4 -7,-7M630,230c0,-4 4,-5 5,-8M877,606c3,5 2,13 7,18M819,675c-6,-2 -13,-3 -20,-5M662,223c2,4 6,4 9,4M770,306c-1,-6 -8,-5 -11,-9M590,279c-1,-4 -2,-7 -3,-11M654,458c1,-6 -7,-7 -6,-12M901,393c-5,-6 -13,0 -19,-5M764,690c-4,-4 -8,-7 -10,-13M683,520c-1,-3 -4,-6 -3,-10M653,273c5,1 7,-5 11,-5M595,383c0,3 1,5 -1,8M841,648c-9,-3 -9,-14 -18,-18M925,586c6,5 14,10 14,20M634,343c3,1 5,0 7,-3M682,542c1,5 7,7 5,14M700,340c-1,-3 -1,-7 -5,-10M746,618c-4,4 -10,0 -13,4M674,339c3,3 -1,8 3,11M614,620c-2,-1 -5,-1 -8,-2M966,642c0,6 -5,10 -4,17M724,668c3,-5 1,-12 6,-16M609,343c-2,-2 -3,-4 -2,-7M822,613c-4,-5 -10,-4 -15,-5M693,443c2,-3 3,-6 5,-9M982,556c-7,-3 -14,-4 -18,-11" stroke="#8ea1bb" stroke-width="1.08" opacity="0.95"/>
<path d="M589,387q-5,-2 -6,-6M606,359q-6,4 -12,6M600,362q2,-9 0,-15M610,404q-4,4 -4,9M614,373q-7,-4 -12,-7M585,394q-2,7 -8,15M628,407q-3,-8 -8,-18M593,372q6,8 15,10M602,337q1,6 0,13M592,393q-7,2 -13,9M601,354q4,9 3,14M588,365q-4,2 -7,5M587,398q-2,4 -6,13M592,418q-7,-4 -14,-6M566,393q2,-3 5,-7M604,384q-4,6 -4,11M580,376q3,8 7,16M612,386q-4,-3 -12,0M591,422q3,3 10,3M613,416q-6,0 -11,6M596,357q2,9 1,16M611,417q0,-4 -2,-11M603,421q-7,2 -19,1M618,392q2,-8 9,-16M594,370q-5,-11 -9,-17M631,391q-10,4 -16,8M593,385q1,9 3,13M589,346q5,-5 6,-7M622,365q4,7 3,11M637,391q-1,-11 -7,-17M584,368q2,12 3,19M596,407q4,0 11,2M595,385q-5,-3 -9,-11M600,383q-3,-9 -6,-14M572,359q7,-5 17,-4M590,390q-10,-2 -18,-3M584,367q1,5 7,13M591,351q8,-6 11,-14M593,392q-2,-5 -6,-14M593,400q8,7 11,13M578,359q4,10 8,15M611,377q1,12 0,19M618,424q-1,4 -8,11M625,369q3,3 5,13M582,355q-3,-2 -10,-2M579,422q-6,2 -7,7M591,353q0,9 6,13M607,398q-3,-5 0,-16M624,412q-3,3 -6,11M596,384q1,-5 8,-10M637,392q-9,8 -15,13M590,388q6,5 11,13M595,340q9,1 15,5M620,358q4,-5 5,-11M573,389q-8,1 -11,1M607,377q1,-2 0,-8M618,420q3,-3 8,-6M628,408q-5,-8 -6,-11M597,342q-8,-1 -11,0M615,361q6,3 12,0M557,377q4,-8 11,-11M610,411q-11,0 -18,-5M585,414q5,0 13,1M577,356q-4,9 -10,12M601,386q12,1 19,-2M633,391q0,-10 -3,-19M602,372q-3,1 -9,-3M619,389q-2,-1 -10,4M592,360q-5,0 -15,-3M613,412q9,4 13,7M602,386q4,-3 14,-6M571,387q-8,1 -16,3M578,423q-3,-8 -7,-13M598,384q-3,0 -8,3M593,431q-9,4 -14,7M583,410q7,5 10,11M626,395q-6,3 -12,6M599,388q-5,-7 -10,-11M599,337q-2,-6 -2,-12M623,348q-1,-4 -1,-10M590,395q-7,-1 -15,-1M582,363q-2,6 -8,7M604,366q5,-3 15,-9M604,411q2,8 5,11M610,407q-7,-6 -10,-14M578,404q-1,-8 -4,-17M583,382q-10,0 -18,6M585,426q0,11 -3,16M575,407q-2,4 -10,8M621,390q10,-4 15,-8M600,385q6,4 12,7M578,397q2,-3 8,-8M619,387q-11,2 -18,3M618,346q6,2 11,1M617,383q6,1 12,-4M595,368q-1,9 2,19M602,399q4,6 7,11M612,369q-4,0 -8,-1M564,358q9,1 14,7M600,377q5,2 11,9M603,416q-1,8 2,16M604,411q2,2 9,-1M605,387q3,-3 9,-9M584,356q-1,10 3,17M619,380q-7,7 -14,11M596,390q10,-5 15,-7M598,410q5,7 11,13M607,359q1,5 7,8M626,352q-5,-4 -5,-9M595,383q10,6 17,8M606,372q-3,6 -2,8M562,373q1,7 5,12M600,350q-4,-3 -7,-12M616,359q-7,-5 -8,-10M599,403q-8,-2 -14,-3M599,349q-4,8 -10,12M611,386q-4,6 -7,11M572,421q5,9 9,13M601,382q-1,-7 -5,-13M627,347q-2,3 -4,8" stroke="#97a7c0" stroke-width="0.9" opacity="0.8"/>
<path d="M612.0,385.0Q618.6,405.4 619.5,415.1Q620.3,424.9 625.8,434.7Q631.3,444.4 634.4,452.7Q637.4,460.9 643.2,472.1Q649.0,483.2 652.3,492.5Q655.7,501.8 656.9,512.4Q658.1,523.1 663.9,533.9Q669.6,544.6 667.5,555.1Q665.4,565.5 669.5,579.2Q673.5,592.9 674.8,603.2Q676.1,613.5 681.4,623.3Q686.6,633.1 684.1,649.1Q681.7,665.2 685.8,683.1L690.0,701.0M600.0,385.0Q599.8,405.7 595.1,417.7Q590.4,429.6 592.1,439.3Q593.8,449.0 589.2,458.2Q584.6,467.4 586.0,481.3Q587.4,495.1 582.6,508.0Q577.8,520.9 575.5,532.2Q573.2,543.5 568.5,557.6Q563.7,571.6 566.2,583.9Q568.6,596.2 564.6,607.1Q560.5,617.9 565.5,633.4Q570.5,648.9 569.5,663.7Q568.5,678.5 571.8,689.8L575.0,701.0M640.0,392.0Q666.1,399.8 678.8,400.4Q691.4,401.0 704.6,407.1Q717.8,413.1 729.3,409.1Q740.9,405.1 751.8,411.5Q762.7,417.9 769.9,417.6Q777.0,417.4 787.3,410.0Q797.5,402.7 812.3,402.1Q827.1,401.4 840.1,390.9Q853.1,380.3 865.4,376.9Q877.6,373.6 889.3,362.0Q901.1,350.4 910.5,341.2L920.0,332.0M775.0,418.0Q775.3,438.4 781.7,448.9Q788.1,459.3 791.7,466.7Q795.3,474.1 800.8,477.7Q806.2,481.4 810.2,488.7Q814.3,496.0 821.5,498.0Q828.8,500.0 839.5,510.5Q850.2,521.1 860.9,530.2Q871.5,539.4 874.5,550.5Q877.5,561.6 884.6,571.7Q891.7,581.8 892.4,593.4Q893.1,605.0 899.4,612.4Q905.8,619.8 906.8,639.9Q907.9,660.0 911.5,680.5L915.0,701.0M640.0,370.0Q652.6,345.3 666.4,339.0Q680.2,332.8 690.3,323.2Q700.4,313.6 709.4,310.6Q718.4,307.5 730.7,299.7Q743.0,292.0 754.2,292.3Q765.5,292.6 776.6,285.0Q787.6,277.5 800.0,283.5Q812.3,289.5 822.0,287.8Q831.8,286.1 843.6,279.2Q855.5,272.4 867.8,267.2L880.0,262.0M655.0,500.0Q677.5,522.1 689.8,541.6Q702.1,561.1 707.1,573.4Q712.1,585.7 719.8,593.4Q727.5,601.1 739.3,612.0Q751.1,622.8 765.4,632.2Q779.7,641.6 793.9,649.7Q808.0,657.9 823.1,662.7Q838.1,667.5 849.7,678.3Q861.2,689.1 870.6,695.0L880.0,701.0M885.0,262.0Q901.8,289.8 914.0,307.7Q926.2,325.6 940.0,346.3Q953.9,367.0 963.0,397.4Q972.1,427.8 984.7,452.5Q997.3,477.2 1003.8,507.5Q1010.4,537.8 1010.8,569.6Q1011.2,601.3 1008.1,629.9Q1004.9,658.4 1006.5,679.7L1008.0,701.0M730.0,465.0Q745.6,474.3 752.2,482.1Q758.8,489.8 761.8,501.1Q764.8,512.5 766.6,521.5Q768.4,530.5 779.4,535.1Q790.4,539.8 795.0,550.8Q799.5,561.8 807.2,572.5Q814.9,583.2 821.8,591.7Q828.7,600.1 831.6,616.5Q834.5,633.0 837.2,650.5L840.0,668.0" stroke="#8799b6" stroke-width="1.25" opacity="0.9" stroke-linejoin="round"/>
<path d="M304.8,209.5L320.0,222.0L340.0,238.0L352.0,246.0L380.0,256.0L406.5,258.8L430.0,270.0L455.0,282.0L480.0,290.0L503.0,272.0L530.0,240.0L545.0,215.0L552.0,197.0M270.5,234.5L290.0,226.0L304.8,209.5M352.0,246.0L349.0,270.0L349.0,282.5L362.0,284.0L373.5,289.5M406.5,258.8L412.0,235.0L405.0,212.0L400.0,197.0M349.0,282.5L368.0,278.0L380.3,257.0M430.0,270.0L460.0,250.0L490.0,238.0L515.0,212.0L520.0,197.0M551.0,281.5L545.0,260.0L533.0,233.0L528.0,210.0L530.0,197.0M551.0,281.5L560.0,300.0M503.0,272.0L551.0,281.5M358.0,197.0L360.0,220.0L352.0,246.0" stroke="#a7b1ce" stroke-width="1.35" opacity="0.9" stroke-linejoin="round"/>
</g>
<polyline points="394.8,338.3 406.0,335.8 431.0,337.0 456.0,337.5 468.5,332.0 483.5,329.5 486.5,319.5 487.3,309.5 498.5,304.5 513.5,302.5 526.0,304.5 533.5,310.8 536.0,314.5 548.5,319.5 561.0,314.5 566.0,302.0 564.8,278.0 578.5,272.0 596.0,259.5 603.5,244.5 611.0,229.5 626.0,212.0 638.5,197.0" fill="none" stroke="#2e3b36" stroke-width="1.15" stroke-linejoin="round"/>
<path d="M477,470 C490,455 500,450 512,446 S530,440 540,452" fill="none" stroke="#7aa9b8" stroke-width="0.7" stroke-dasharray="1.2 1.6"/>
<path d="M446,497 C470,490 500,488 520,470" fill="none" stroke="#7aa9b8" stroke-width="0.7" stroke-dasharray="1.2 1.6"/>
<g font-family="'Liberation Sans','Noto Sans CJK KR',sans-serif" text-anchor="middle" paint-order="stroke" stroke="#ffffff" stroke-linejoin="round">
<text x="320.4" y="212.3" font-size="7.91" fill="#5f6368" stroke-width="1.6" stroke-opacity=".75">장연군</text>
<text x="301.6" y="237.5" font-size="8.36" fill="#5f6368" stroke-width="1.6" stroke-opacity=".75">Monggumpo-ri</text>
<text x="364.1" y="259.8" font-size="7.91" fill="#5f6368" stroke-width="1.6" stroke-opacity=".75">벽성군</text>
<text x="422.9" y="261.0" font-size="8.36" fill="#5f6368" stroke-width="1.6" stroke-opacity=".75">해주시</text>
<text x="332.9" y="284.8" font-size="7.91" fill="#5f6368" stroke-width="1.6" stroke-opacity=".75">옹진군</text>
<text x="389.1" y="292.3" font-size="7.91" fill="#5f6368" stroke-width="1.6" stroke-opacity=".75">강령군</text>
<text x="486.5" y="274.8" font-size="7.91" fill="#5f6368" stroke-width="1.6" stroke-opacity=".75">배천군</text>
<text x="495.4" y="292.8" font-size="7.91" fill="#5f6368" stroke-width="1.6" stroke-opacity=".75">연안군</text>
<text x="536.0" y="285.0" font-size="9.63" font-weight="500" fill="#3c4043" stroke-width="2" stroke-opacity=".85">개성</text>
<text x="549.1" y="235.8" font-size="7.91" fill="#5f6368" stroke-width="1.6" stroke-opacity=".75">금천군</text>
<text x="579.1" y="251.8" font-size="7.91" fill="#5f6368" stroke-width="1.6" stroke-opacity=".75">장풍군</text>
<text x="584.2" y="310.2" font-size="8.99" font-weight="500" fill="#3c4043" stroke-width="2" stroke-opacity=".85">파주</text>
<text x="591.8" y="336.4" font-size="9.42" font-weight="500" fill="#3c4043" stroke-width="2" stroke-opacity=".85">고양</text>
<text x="658.0" y="337.4" font-size="9.42" font-weight="500" fill="#3c4043" stroke-width="2" stroke-opacity=".85">남양주</text>
<text x="617.8" y="360.2" font-size="12.2" font-weight="500" fill="#2f3235" stroke-width="2.2" stroke-opacity=".9">서울</text>
<text x="659.5" y="268.5" font-size="7.46" fill="#5f6368" stroke-width="1.6" stroke-opacity=".75">포천</text>
<text x="739.1" y="286.4" font-size="10.06" font-weight="500" fill="#3c4043" stroke-width="2" stroke-opacity=".85">춘천</text>
<text x="730.5" y="230.8" font-size="7.68" fill="#5f6368" stroke-width="1.6" stroke-opacity=".75">화천</text>
<text x="809.8" y="311.2" font-size="10.17" fill="#5a5f66" stroke-width="1.8" stroke-opacity=".8" letter-spacing="1.6">강원도</text>
<text x="794.2" y="335.8" font-size="7.68" fill="#5f6368" stroke-width="1.6" stroke-opacity=".75">홍천</text>
<text x="824.0" y="244.8" font-size="7.91" fill="#5f6368" stroke-width="1.6" stroke-opacity=".75">인제</text>
<text x="871.6" y="220.3" font-size="7.91" fill="#5f6368" stroke-width="1.6" stroke-opacity=".75">속초</text>
<text x="861.6" y="363.6" font-size="7.91" fill="#5f6368" stroke-width="1.6" stroke-opacity=".75">평창</text>
<text x="692.9" y="201.3" font-size="7.91" fill="#5f6368" stroke-width="1.6" stroke-opacity=".75">철원</text>
<text x="886.0" y="274.8" font-size="7.91" fill="#5f6368" stroke-width="1.6" stroke-opacity=".75">양양</text>
<text x="921.5" y="323.6" font-size="10.06" font-weight="500" fill="#3c4043" stroke-width="2" stroke-opacity=".85">강릉</text>
<text x="958.9" y="369.8" font-size="7.91" fill="#5f6368" stroke-width="1.6" stroke-opacity=".75">동해</text>
<text x="970.6" y="424.2" font-size="7.91" fill="#5f6368" stroke-width="1.6" stroke-opacity=".75">삼척</text>
<text x="943.9" y="447.2" font-size="7.91" fill="#5f6368" stroke-width="1.6" stroke-opacity=".75">태백</text>
<text x="569.1" y="404.4" font-size="12.2" font-weight="500" fill="#2f3235" stroke-width="2.2" stroke-opacity=".9">인천</text>
<text x="618.9" y="442.5" font-size="9.63" font-weight="500" fill="#3c4043" stroke-width="2" stroke-opacity=".85">수원</text>
<text x="653.9" y="436.5" font-size="9.63" font-weight="500" fill="#3c4043" stroke-width="2" stroke-opacity=".85">용인</text>
<text x="702.8" y="403.7" font-size="10.17" fill="#5a5f66" stroke-width="1.8" stroke-opacity=".8" letter-spacing="1.6">경기도</text>
<text x="770.4" y="416.6" font-size="10.06" font-weight="500" fill="#3c4043" stroke-width="2" stroke-opacity=".85">원주</text>
<text x="805.2" y="472.3" font-size="7.91" fill="#5f6368" stroke-width="1.6" stroke-opacity=".75">제천</text>
<text x="779.0" y="492.7" font-size="8.99" font-weight="500" fill="#3c4043" stroke-width="2" stroke-opacity=".85">충주</text>
<text x="732.3" y="494.7" font-size="10.17" fill="#5a5f66" stroke-width="1.8" stroke-opacity=".8" letter-spacing="1.6">충청북도</text>
<text x="540.9" y="319.1" font-size="7.23" fill="#5f6368" stroke-width="1.6" stroke-opacity=".75">암실</text>
<text x="528.0" y="534.4" font-size="9.42" font-weight="500" fill="#3c4043" stroke-width="2" stroke-opacity=".85">서산</text>
<text x="553.9" y="582.0" font-size="7.46" fill="#5f6368" stroke-width="1.6" stroke-opacity=".75">홍성</text>
<text x="586.8" y="559.7" font-size="10.17" fill="#5a5f66" stroke-width="1.8" stroke-opacity=".8" letter-spacing="1.6">충청남도</text>
<text x="661.1" y="582.8" font-size="11.75" font-weight="500" fill="#2f3235" stroke-width="2.2" stroke-opacity=".9">세종</text>
<text x="699.8" y="569.1" font-size="10.06" font-weight="500" fill="#3c4043" stroke-width="2" stroke-opacity=".85">청주</text>
<text x="682.6" y="632.4" font-size="12.2" font-weight="500" fill="#2f3235" stroke-width="2.2" stroke-opacity=".9">대전</text>
<text x="616.0" y="701.2" font-size="8.99" font-weight="500" fill="#3c4043" stroke-width="2" stroke-opacity=".85">익산</text>
<text x="880.0" y="515.8" font-size="7.91" fill="#5f6368" stroke-width="1.6" stroke-opacity=".75">영주</text>
<text x="806.0" y="555.8" font-size="7.91" fill="#5f6368" stroke-width="1.6" stroke-opacity=".75">문경</text>
<text x="910.0" y="580.8" font-size="7.91" fill="#5f6368" stroke-width="1.6" stroke-opacity=".75">안동</text>
<text x="1005.2" y="513.5" font-size="8.36" fill="#5f6368" stroke-width="1.6" stroke-opacity=".75">울진</text>
<text x="1008.5" y="606.4" font-size="8.36" fill="#5f6368" stroke-width="1.6" stroke-opacity=".75">영덕</text>
<text x="793.0" y="614.8" font-size="7.91" fill="#5f6368" stroke-width="1.6" stroke-opacity=".75">상주</text>
<text x="841.0" y="661.2" font-size="10.06" font-weight="500" fill="#3c4043" stroke-width="2" stroke-opacity=".85">구미</text>
<text x="928.1" y="653.5" font-size="10.17" fill="#5a5f66" stroke-width="1.8" stroke-opacity=".8" letter-spacing="1.6">경상북도</text>
<text x="797.3" y="695.8" font-size="7.91" fill="#5f6368" stroke-width="1.6" stroke-opacity=".75">김천</text>
</g>
<g fill="#fff" stroke="#4a4f55" stroke-width="0.8">
<circle cx="304.8" cy="209.5" r="1.5"/>
<circle cx="270.5" cy="234.5" r="1.5"/>
<circle cx="380.3" cy="257.0" r="1.5"/>
<circle cx="406.5" cy="258.8" r="1.5"/>
<circle cx="349.0" cy="282.5" r="1.5"/>
<circle cx="373.5" cy="289.5" r="1.5"/>
<circle cx="503.5" cy="271.5" r="1.5"/>
<circle cx="480.0" cy="290.0" r="1.5"/>
<circle cx="551.0" cy="281.5" r="1.5"/>
<circle cx="533.0" cy="233.0" r="1.5"/>
<circle cx="563.5" cy="249.0" r="1.5"/>
<circle cx="584.0" cy="298.0" r="1.5"/>
<circle cx="591.8" cy="343.0" r="1.5"/>
<circle cx="658.0" cy="344.0" r="1.5"/>
<circle cx="658.8" cy="275.0" r="1.5"/>
<circle cx="739.3" cy="292.3" r="1.5"/>
<circle cx="730.5" cy="236.0" r="1.5"/>
<circle cx="794.0" cy="325.0" r="1.5"/>
<circle cx="824.8" cy="250.0" r="1.5"/>
<circle cx="871.0" cy="226.5" r="1.5"/>
<circle cx="861.0" cy="368.0" r="1.5"/>
<circle cx="885.0" cy="264.8" r="1.5"/>
<circle cx="922.4" cy="330.0" r="1.5"/>
<circle cx="959.6" cy="376.6" r="1.5"/>
<circle cx="970.0" cy="430.2" r="1.5"/>
<circle cx="569.0" cy="390.0" r="1.5"/>
<circle cx="620.0" cy="429.5" r="1.5"/>
<circle cx="655.0" cy="442.0" r="1.5"/>
<circle cx="771.0" cy="424.0" r="1.5"/>
<circle cx="805.5" cy="479.5" r="1.5"/>
<circle cx="764.8" cy="489.5" r="1.5"/>
<circle cx="528.0" cy="541.0" r="1.5"/>
<circle cx="554.0" cy="588.0" r="1.5"/>
<circle cx="660.6" cy="590.6" r="1.5"/>
<circle cx="699.9" cy="575.5" r="1.5"/>
<circle cx="682.6" cy="639.2" r="1.5"/>
<circle cx="880.0" cy="521.5" r="1.5"/>
<circle cx="806.0" cy="561.5" r="1.5"/>
<circle cx="910.0" cy="586.0" r="1.5"/>
<circle cx="840.5" cy="668.0" r="1.5"/>
<circle cx="793.5" cy="619.5" r="1.5"/>
<circle cx="943.5" cy="454.0" r="1.5"/>
</g>
<circle cx="616" cy="369" r="2.6" fill="#fff" stroke="#333" stroke-width="0.9"/><circle cx="616" cy="369" r="1.1" fill="#333"/>
<g font-family="'Liberation Sans',sans-serif" font-weight="700" font-size="6" text-anchor="middle" fill="#fff">
<path d="M873.2,245.0 h12 v6.2 q0,4.2 -6,6 q-6,-1.800 -6,-6z" fill="#3b5fc4" stroke="#fff" stroke-width=".7"/>
<rect x="873.2" y="245.0" width="12" height="2.6" fill="#d2493c"/>
<text x="879.2" y="254.6">65</text>
<path d="M664.5,405.3 h12 v6.2 q0,4.2 -6,6 q-6,-1.800 -6,-6z" fill="#3b5fc4" stroke="#fff" stroke-width=".7"/>
<rect x="664.5" y="405.3" width="12" height="2.6" fill="#d2493c"/>
<text x="670.5" y="414.9">37</text>
<path d="M723.0,459.3 h12 v6.2 q0,4.2 -6,6 q-6,-1.800 -6,-6z" fill="#3b5fc4" stroke="#fff" stroke-width=".7"/>
<rect x="723.0" y="459.3" width="12" height="2.6" fill="#d2493c"/>
<text x="729.0" y="468.9">45</text>
<path d="M644.6,599.1 h12 v6.2 q0,4.2 -6,6 q-6,-1.800 -6,-6z" fill="#3b5fc4" stroke="#fff" stroke-width=".7"/>
<rect x="644.6" y="599.1" width="12" height="2.6" fill="#d2493c"/>
<text x="650.6" y="608.7">30</text>
<path d="M573.0,680.8 h12 v6.2 q0,4.2 -6,6 q-6,-1.800 -6,-6z" fill="#3b5fc4" stroke="#fff" stroke-width=".7"/>
<rect x="573.0" y="680.8" width="12" height="2.6" fill="#d2493c"/>
<text x="579.0" y="690.4">151</text>
<path d="M867.6,534.2 h12 v6.2 q0,4.2 -6,6 q-6,-1.800 -6,-6z" fill="#3b5fc4" stroke="#fff" stroke-width=".7"/>
<rect x="867.6" y="534.2" width="12" height="2.6" fill="#d2493c"/>
<text x="873.6" y="543.8">55</text>
</g>
<path d="M612.0,412.0 c-1.2,-3.800 -8.800,-10.900 -8.800,-18.200 a8.800,8.800 0 0 1 17.600,0 c0,7.300 -7.600,14.400 -8.800,18.200z" fill="#f29f1d" stroke="#fff" stroke-opacity=".65" stroke-width=".7"/>
<circle cx="612.0" cy="394.2" r="4.4" fill="#fff"/>
<path d="M826.0,326.5 c-1.2,-3.800 -8.800,-10.900 -8.800,-18.200 a8.800,8.800 0 0 1 17.600,0 c0,7.300 -7.600,14.400 -8.800,18.200z" fill="#f29f1d" stroke="#fff" stroke-opacity=".65" stroke-width=".7"/>
<circle cx="826.0" cy="308.7" r="4.4" fill="#fff"/>
<path d="M540.6,566.4 c-1.2,-3.800 -8.800,-10.900 -8.800,-18.200 a8.800,8.800 0 0 1 17.600,0 c0,7.300 -7.600,14.400 -8.800,18.200z" fill="#f29f1d" stroke="#fff" stroke-opacity=".65" stroke-width=".7"/>
<circle cx="540.6" cy="548.6" r="4.4" fill="#fff"/>
<path d="M708.4,558.3 c-1.2,-3.800 -8.800,-10.900 -8.800,-18.200 a8.800,8.800 0 0 1 17.600,0 c0,7.300 -7.600,14.400 -8.800,18.200z" fill="#f29f1d" stroke="#fff" stroke-opacity=".65" stroke-width=".7"/>
<circle cx="708.4" cy="540.5" r="4.4" fill="#fff"/>
<path d="M569.8,574.4 c-1.2,-3.800 -8.800,-10.900 -8.800,-18.200 a8.800,8.800 0 0 1 17.600,0 c0,7.300 -7.600,14.400 -8.800,18.200z" fill="#e2433f" stroke="#fff" stroke-opacity=".65" stroke-width=".7"/>
<circle cx="569.8" cy="556.6" r="4.4" fill="#fff"/>
</svg>
    <!-- map controls -->
    <div class="abs" style="left:995px;top:8px;width:27.5px;height:29.5px;background:#fff;border-radius:2px;box-shadow:0 1px 2px rgba(0,0,0,.25)">
      <svg class="abs" style="left:7px;top:8.5px" width="13.5" height="13" viewBox="0 0 18 18" fill="none" stroke="#707070" stroke-width="2.3"><path d="M1.3 6V1.3H6M12 1.3h4.7V6M16.7 12v4.7H12M6 16.7H1.3V12"/></svg>
    </div>
    <div class="abs" style="left:995px;top:377px;width:27px;height:21px;background:#fff;border-radius:11px"></div>
    <div class="abs" style="left:994.7px;top:427px;width:27px;height:60px;background:#fff;border-radius:2px;box-shadow:0 1px 2px rgba(0,0,0,.25)"></div>
    <!-- attribution -->
    <div class="abs" style="left:777px;top:494px;width:253px;height:10px;background:rgba(245,247,247,.72)"></div>
    <div class="abs" style="left:784.5px;top:495.3px;font-size:6.8px;line-height:10px;color:#222;white-space:nowrap">단축키</div>
    <div class="abs" style="left:812px;top:495.3px;font-size:6.8px;line-height:10px;color:#222;white-space:nowrap">지도 데이터 ©2025 Google, TMap Mobility</div>
    <div class="abs" style="left:940.5px;top:494.5px;width:1px;height:9px;background:#cfd4d6"></div>
    <div class="abs" style="left:945px;top:495.3px;font-size:6.8px;line-height:10px;color:#222;white-space:nowrap">20 km</div>
    <div class="abs" style="left:966.5px;top:497.5px;width:40px;height:5px;border:1.8px solid #222;border-top:none"></div>
    <div class="abs" style="left:6.5px;top:486.5px;font-size:11.4px;line-height:16px;color:#fff;letter-spacing:-.2px;font-weight:700;text-shadow:0 0 1.2px rgba(50,100,120,.95),0 0 1.2px rgba(50,100,120,.95),0 0 2px rgba(50,100,120,.6);white-space:nowrap">Google</div>
  </div>
</div>
<div class="base"><div class="notch"></div></div>
<div class="foot"></div>
<!-- phone -->
<div class="abs" style="left:1176px;top:334px;width:6px;height:20px;background:#c9cbcb;border-radius:2px 0 0 2px"></div>
<div class="abs" style="left:1176px;top:372px;width:6px;height:38px;background:#c9cbcb;border-radius:2px 0 0 2px"></div>
<div class="abs" style="left:1176px;top:420px;width:6px;height:39px;background:#c9cbcb;border-radius:2px 0 0 2px"></div>
<div class="abs" style="left:1443px;top:385px;width:4.5px;height:64px;background:#c9cbcb;border-radius:0 2px 2px 0"></div>
<div class="abs" style="left:1180.5px;top:263px;width:265px;height:534.6px;background:#000;border:2px solid #e4e6e6;border-right-width:3.4px;border-radius:38px"></div>
<div class="abs" style="left:1196px;top:278px;width:232px;height:504px;border-radius:19px;overflow:hidden;background:#36533d;font-family:'Liberation Sans','Noto Sans CJK KR',sans-serif">
  <svg class="abs" style="left:0;top:0" width="232" height="504" viewBox="1196 278 232 504">
    <defs>
      <filter id="pb1" x="-10%" y="-10%" width="120%" height="120%"><feGaussianBlur stdDeviation="1.2"/></filter>
      <filter id="pb4" x="-30%" y="-30%" width="160%" height="160%"><feGaussianBlur stdDeviation="5"/></filter>
      <filter id="tex" x="1196" y="278" width="232" height="504" filterUnits="userSpaceOnUse" color-interpolation-filters="sRGB">
        <feTurbulence type="fractalNoise" baseFrequency="0.045 0.06" numOctaves="3" seed="11" result="n"/>
        <feColorMatrix in="n" type="matrix" values="0 0 0 0 0.10  0 0 0 0 0.23  0 0 0 0 0.17  1.7 1.3 0 0 -1.1"/>
      </filter>
      <filter id="tex2" x="1196" y="278" width="232" height="504" filterUnits="userSpaceOnUse" color-interpolation-filters="sRGB">
        <feTurbulence type="fractalNoise" baseFrequency="0.07 0.09" numOctaves="2" seed="4" result="n"/>
        <feColorMatrix in="n" type="matrix" values="0 0 0 0 0.62  0 0 0 0 0.70  0 0 0 0 0.52  0 1.8 1.4 0 -1.45"/>
      </filter>
      <linearGradient id="pg" x1="0" y1="0" x2="1" y2="1"><stop offset="0" stop-color="#f3cfcf"/><stop offset=".35" stop-color="#e3abab"/><stop offset="1" stop-color="#d79b9b"/></linearGradient>
    </defs>
    <rect x="1196" y="278" width="232" height="504" fill="#466649"/>
    <g filter="url(#pb4)">
      <!-- broad tone areas -->
      <rect x="1186" y="268" width="260" height="40" fill="#a3b08c"/>
      <ellipse cx="1385" cy="305" rx="52" ry="20" fill="#b4bd9c"/>
      <ellipse cx="1222" cy="300" rx="30" ry="12" fill="#7c9472"/>
      <ellipse cx="1400" cy="345" rx="26" ry="22" fill="#2c4834"/>
      <ellipse cx="1300" cy="392" rx="110" ry="12" fill="#35543b"/>
      <ellipse cx="1222" cy="440" rx="30" ry="44" fill="#3c5d42"/>
      <ellipse cx="1412" cy="470" rx="20" ry="40" fill="#58774f"/>
      <ellipse cx="1416" cy="560" rx="16" ry="60" fill="#5f7f56"/>
      <ellipse cx="1418" cy="655" rx="20" ry="42" fill="#86996f"/>
      <ellipse cx="1350" cy="640" rx="28" ry="40" fill="#2b4632"/>
      <ellipse cx="1212" cy="585" rx="18" ry="44" fill="#3a5a3f"/>
      <ellipse cx="1290" cy="560" rx="20" ry="30" fill="#35533a"/>
      <ellipse cx="1260" cy="665" rx="60" ry="22" fill="#4f6d49"/>
    </g>
    <rect x="1196" y="278" width="232" height="504" filter="url(#tex)"/>
    <rect x="1196" y="278" width="232" height="504" filter="url(#tex2)" opacity=".6"/>
    <ellipse cx="1340" cy="298" rx="80" ry="10" fill="#c3caa9" opacity=".7" filter="url(#pb4)"/>
    <ellipse cx="1350" cy="303" rx="60" ry="8" fill="#c9cfad" opacity=".85" filter="url(#pb4)"/>
    <ellipse cx="1222" cy="296" rx="30" ry="13" fill="#86a07c" opacity=".6" filter="url(#pb4)"/>
    <ellipse cx="1400" cy="294" rx="30" ry="9" fill="#a9b692" opacity=".6" filter="url(#pb4)"/>
    <ellipse cx="1392" cy="334" rx="42" ry="17" fill="#21483a" opacity=".85" filter="url(#pb4)"/>
    <g filter="url(#pb1)">
      <!-- dark band below the top strip -->
      <path d="M1196,314 C1230,306 1270,308 1310,312 S1400,322 1428,336" fill="none" stroke="#2a4432" stroke-width="9"/>
      <!-- yard -->
      <polygon points="1198,324 1238,318 1262,318 1316,326 1312,350 1300,366 1258,361 1198,352" fill="#cfd2b5"/>
      <polygon points="1240,319 1264,321 1258,349 1236,346" fill="#86ab98"/>
      <polygon points="1263,327 1315,329 1314,338 1262,336" fill="#3390d0"/>
      <polygon points="1236,347 1252,349 1251,353 1235,351" fill="#3d86c8"/>
      <polygon points="1289,353 1297,355 1294,363 1286,361" fill="#4a95d6"/>
      <polygon points="1228,343 1233,344 1231,351 1226,350" fill="#d4616a"/>
      <!-- dark field -->
      <polygon points="1316,326 1350,322 1376,372 1372,379 1306,366" fill="#2c4a36"/>
      <!-- light path on the right -->
      <path d="M1366,352 C1380,356 1384,366 1400,368 S1420,372 1430,378" fill="none" stroke="#c8cdb2" stroke-width="8"/>
      <path d="M1374,352 C1376,362 1374,370 1378,380" fill="none" stroke="#c2c8ac" stroke-width="6"/>
      <!-- main road -->
      <path d="M1194,357 C1240,360 1290,366 1330,380 S1400,412 1430,436" fill="none" stroke="#3a5740" stroke-width="11"/>
      <path d="M1194,357 C1240,360 1290,366 1330,380 S1400,412 1430,436" fill="none" stroke="#93ad99" stroke-width="6"/>
      <!-- thin light road around the field -->
      <path d="M1194,392 C1235,395 1270,402 1295,412.5 S1345,438 1365,455 S1395,485 1402,500 S1406,560 1401,580 S1388,622 1380,640 S1379,670 1376,692" fill="none" stroke="#dfe3d1" stroke-width="3"/>
      <path d="M1372,461 C1386,474 1397,488 1402,500 S1406,560 1401,580 S1388,622 1380,640 S1379,670 1376,692" fill="none" stroke="#ced4ba" stroke-width="6.4"/>
      <!-- stream -->
      <path d="M1252,408 C1240,424 1230,446 1227,468 L1198,478" fill="none" stroke="#3d6f98" stroke-width="2.2"/>
      <!-- lower-left fields -->
      <polygon points="1224.5,521.7 1241.7,507.4 1266,539 1247.5,546 1237.4,541.8" fill="#bfc08d"/>
      <polygon points="1237.4,547.6 1263.3,541.8 1276.2,590.7 1244.6,596.4" fill="#76895a"/>
      <polygon points="1264.7,541.8 1273.3,540.4 1310.7,602.2 1299.2,605 1276.2,590.7" fill="#9ca775"/>
      <polygon points="1224.5,613.7 1247.5,608 1305,609.4 1310.7,631 1276.2,642.4 1227.4,642.4" fill="#647e53"/>
      <path d="M1228,616 l78,-3 M1228,621 l80,-2 M1228,626 l82,-1 M1228,631 l80,0 M1228,636 l66,2" stroke="#4f6843" stroke-width="1.4"/>
      <polygon points="1325,594 1397,551 1391,608 1351,631" fill="#2b4b36"/>
      <polygon points="1232,533 1240,535 1238,541 1230,539" fill="#3f5f9a"/>
      <!-- right pale band -->
      <path d="M1404,640 C1412,660 1408,680 1414,700" fill="none" stroke="#a8b491" stroke-width="12" opacity=".85"/>
      <!-- bottom-left building -->
      <polygon points="1222,684 1238,690 1236,700 1220,696" fill="#8a4a44"/>
      <polygon points="1240,688 1262,690 1262,698 1240,696" fill="#6f9c84"/>
    </g>
    <!-- field polygon -->
    <polygon points="1249.9,423.2 1279.1,415.7 1323,425.5 1362,453 1386.3,487.2 1396,547.3 1324.6,592.8 1258,501.8 1224.5,480.7" fill="url(#pg)" opacity=".96"/>
    <circle cx="1308.3" cy="477.5" r="5.6" fill="#2a66d9"/>
    <circle cx="1308.3" cy="477.5" r="3.1" fill="#fff"/>
  </svg>

  <!-- top controls -->
  <div class="abs" style="left:10px;top:7px;width:19.5px;height:23px;background:#f6f9f6;border-radius:4px">
    <svg class="abs" style="left:4.5px;top:6.5px" width="10.5" height="10" viewBox="0 0 21 20" stroke="#222" stroke-width="2"><path d="M1 4h19M1 10h19M1 16h19"/></svg>
  </div>
  <div class="abs" style="left:33px;top:7px;width:20.5px;height:23px;background:#f6f9f6;border-radius:4px">
    <svg class="abs" style="left:3.2px;top:4.5px" width="14" height="14" viewBox="0 0 24 24"><circle cx="12" cy="12" r="10" fill="none" stroke="#111" stroke-width="2.4"/><path d="M17 7l-3.4 7.2L7 17l3.2-6.8z" fill="#111"/></svg>
  </div>
  <div class="abs" style="left:55.5px;top:4px;width:36.5px;height:26px;background:#4080ee;border-radius:4px;color:#fff;font-size:8.2px;line-height:31px;text-align:center;font-weight:700;white-space:nowrap">전경 뷰</div>

  <!-- legend -->
  <div class="abs" style="left:47px;top:364.5px;width:138px;height:40px;background:#fff;border-radius:5px;overflow:hidden;box-shadow:0 1px 3px rgba(0,0,0,.35)">
    <div class="abs" style="left:0;top:0;width:138px;height:20px;background:linear-gradient(90deg,#fffdfd 0%,#fde3e3 25%,#f6bcbc 50%,#ea7b7b 72%,#d62a2a 92%,#cf1f1f 100%)"></div>
    <div class="abs" style="left:3.8px;top:23.5px;font-size:6.8px;line-height:12px;color:#1f1f1f;white-space:nowrap;font-weight:400">ⓘ 빨간색이 진할수록 수분 스트레스가 심해요.</div>
  </div>

  <!-- bottom sheet -->
  <div class="abs" style="left:0;top:415px;width:232px;height:89px;background:#fff;border-radius:13px 13px 0 0">
    <div class="abs" style="left:78.5px;top:4px;width:75px;height:3.3px;background:#d3d4d4;border-radius:2px"></div>
    <div class="abs" style="left:0;top:15px;width:232px;height:1px;background:#eceeee"></div>
    <div class="abs" style="left:7px;top:19px;font-size:11.6px;line-height:20px;font-weight:700;color:#1d2126;white-space:nowrap;letter-spacing:-.3px">청주 양파밭</div>
    <div class="abs" style="left:8.5px;top:42.5px;width:7.2px;height:7.2px;background:#adafaf;border-radius:1.8px"></div>
    <div class="abs" style="left:10.4px;top:44.4px;width:3.4px;height:3.4px;background:#e9eaea;border-radius:50%"></div>
    <div class="abs" style="left:17.5px;top:40.5px;font-size:7px;line-height:11px;color:#70757a;white-space:nowrap">최은석님 장비&nbsp; v3_7</div>
    <div class="abs" style="left:0;top:55px;width:232px;height:1px;background:#eceeee"></div>
    <!-- tabs -->
    <svg class="abs" style="left:31.5px;top:59.5px" width="15" height="14" viewBox="0 0 30 28"><path d="M15 2L1.5 13.5h3.8V26h19.4V13.5h3.8L24 9.6V4.5h-3v2.4z" fill="#1d7ea9"/><path d="M15 .6L.8 12.8" stroke="#1d7ea9" stroke-width="1.6"/><rect x="12" y="17" width="6" height="9" rx="1.5" fill="#fff"/></svg>
    <div class="abs" style="left:24px;top:74.5px;width:30px;text-align:center;font-size:5.2px;line-height:7px;color:#1d7ea9;white-space:nowrap">농장</div>
    <svg class="abs" style="left:108.5px;top:59.5px" width="15" height="14.5" viewBox="0 0 30 29" fill="none" stroke="#686c70" stroke-width="2.2"><rect x="2" y="2" width="11" height="10.5" rx="1"/><rect x="17" y="2" width="11" height="10.5" rx="1"/><rect x="2" y="16.5" width="11" height="10.5" rx="1"/><rect x="17" y="16.5" width="11" height="10.5" rx="1"/></svg>
    <div class="abs" style="left:101px;top:74.5px;width:30px;text-align:center;font-size:5.2px;line-height:7px;color:#686c70;white-space:nowrap">서비스</div>
    <svg class="abs" style="left:187px;top:60.5px" width="12" height="12.5" viewBox="0 0 24 25" fill="#4a4e52"><circle cx="12" cy="7" r="5.6"/><path d="M1 24.5v-3.2c0-4.4 7-6 11-6s11 1.600 11 6v3.200z"/></svg>
    <div class="abs" style="left:178px;top:74.5px;width:30px;text-align:center;font-size:5.2px;line-height:7px;color:#686c70;white-space:nowrap">계정</div>
  </div>
</div>
<!-- notch -->
<div class="abs" style="left:1246px;top:270px;width:134px;height:25.5px;background:#000;border-radius:0 0 11px 11px"></div>
<div class="abs" style="left:1293px;top:282px;width:36px;height:6px;background:#676767;border-radius:3px"></div>
<div class="abs" style="left:1340px;top:281.5px;width:7px;height:7px;background:#5c5c5c;border-radius:50%"></div>

</body>
</html>
